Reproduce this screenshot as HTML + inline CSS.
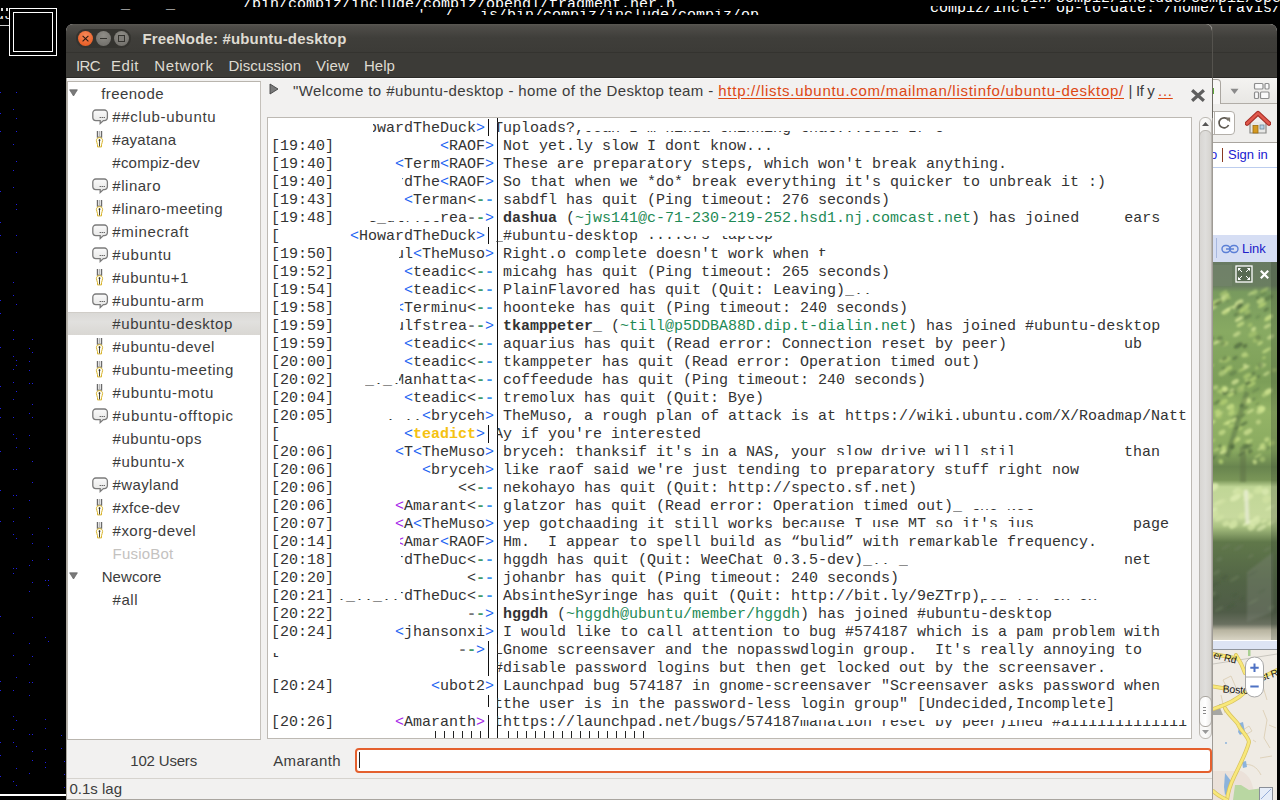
<!DOCTYPE html><html><head><meta charset="utf-8"><style>
*{margin:0;padding:0;box-sizing:border-box}
html,body{width:1280px;height:800px;overflow:hidden;background:#000;position:relative}
.a{position:absolute}
.t{position:absolute;white-space:pre;font-family:'Liberation Sans', sans-serif;line-height:normal}
.m{position:absolute;white-space:pre;font-family:'Liberation Mono', monospace;font-size:15px;line-height:18px;color:#333}
</style></head><body><div class="a" style="left:0;top:0px;width:1280px;height:7.3px;overflow:hidden"><div class="m" style="left:243px;top:-4.5px;color:#fff">/bin/compiz/include/compiz/opengl/fragment.her.h</div></div><div class="a" style="left:0;top:8.5px;width:1280px;height:6.0px;overflow:hidden"><div class="m" style="left:417px;top:-1.5px;color:#fff">&#x27;  / ..is/bin/compiz/include/compiz/op</div></div><div class="a" style="left:0;top:0px;width:1280px;height:4.5px;overflow:hidden"><div class="m" style="left:1011px;top:-10px;color:#fff">/bin/compiz/include/compiz/ope</div></div><div class="a" style="left:0;top:6px;width:1280px;height:7.5px;overflow:hidden"><div class="m" style="left:930px;top:-6.5px;color:#fff">compiz/incl-- op-to-date: /home/travis/b</div></div><div class="a" style="left:0;top:7.5px;width:1280px;height:2.0px;overflow:hidden"><div class="m" style="left:112px;top:-11.5px;color:#fff">._. . _ .</div></div><div class="a" style="left:0;top:15.5px;width:9px;height:6px;overflow:hidden"><div class="m" style="left:-5px;top:-8.5px;color:#eee">uu</div></div><div class="a" style="left:1px;top:8px;width:1.5px;height:3px;background:#ddd"></div><div class="a" style="left:6px;top:8px;width:1.5px;height:3px;background:#ddd"></div><div class="a" style="left:0;top:25px;width:9px;height:1px;background:#ccc"></div><svg class="a" style="left:0;top:0" width="66" height="800"><path fill="#1f1fe0" d="M0 92h1v1h-1zM0 113h1v1h-1zM0 131h1v1h-1zM0 191h1v1h-1zM0 222h1v1h-1zM0 235h1v1h-1zM0 300h1v1h-1zM0 313h1v1h-1zM0 347h1v1h-1zM0 386h1v1h-1zM0 408h1v1h-1zM0 417h1v1h-1zM0 451h1v1h-1zM0 490h1v1h-1zM0 521h1v1h-1zM0 616h1v1h-1zM0 681h1v1h-1zM0 690h1v1h-1zM0 742h1v1h-1zM0 755h1v1h-1zM0 776h1v1h-1zM16 92h1v1h-1zM13 109h1v1h-1zM16 118h1v1h-1zM16 131h1v1h-1zM13 144h1v1h-1zM16 161h1v1h-1zM13 170h1v1h-1zM13 187h1v1h-1zM16 204h1v1h-1zM16 209h1v1h-1zM16 235h1v1h-1zM16 252h1v1h-1zM13 282h1v1h-1zM13 295h1v1h-1zM16 304h1v1h-1zM13 330h1v1h-1zM13 339h1v1h-1zM13 356h1v1h-1zM16 360h1v1h-1zM13 369h1v1h-1zM16 365h1v1h-1zM13 382h1v1h-1zM13 399h1v1h-1zM16 391h1v1h-1zM13 417h1v1h-1zM13 434h1v1h-1zM16 438h1v1h-1zM16 447h1v1h-1zM13 469h1v1h-1zM16 469h1v1h-1zM13 495h1v1h-1zM16 495h1v1h-1zM13 508h1v1h-1zM13 521h1v1h-1zM13 534h1v1h-1zM16 538h1v1h-1zM13 568h1v1h-1zM16 568h1v1h-1zM13 573h1v1h-1zM13 633h1v1h-1zM13 655h1v1h-1zM16 677h1v1h-1zM13 690h1v1h-1zM13 716h1v1h-1zM16 720h1v1h-1zM13 729h1v1h-1zM13 742h1v1h-1zM16 746h1v1h-1zM16 768h1v1h-1zM13 781h1v1h-1zM16 785h1v1h-1zM32 339h1v1h-1zM29 348h1v1h-1zM32 352h1v1h-1zM29 361h1v1h-1zM29 370h1v1h-1zM29 383h1v1h-1zM32 383h1v1h-1zM32 404h1v1h-1zM29 413h1v1h-1zM32 417h1v1h-1zM29 435h1v1h-1zM29 448h1v1h-1zM32 461h1v1h-1zM32 482h1v1h-1zM29 500h1v1h-1zM29 517h1v1h-1zM32 534h1v1h-1zM32 543h1v1h-1zM32 560h1v1h-1zM29 565h1v1h-1zM32 582h1v1h-1zM29 591h1v1h-1zM32 617h1v1h-1zM29 643h1v1h-1zM29 664h1v1h-1zM32 656h1v1h-1zM29 682h1v1h-1zM32 682h1v1h-1zM29 695h1v1h-1zM29 734h1v1h-1zM32 734h1v1h-1zM32 751h1v1h-1zM32 760h1v1h-1zM29 773h1v1h-1zM48 528h1v1h-1zM48 546h1v1h-1zM48 559h1v1h-1zM45 580h1v1h-1zM48 580h1v1h-1zM48 585h1v1h-1zM45 637h1v1h-1zM48 641h1v1h-1zM45 719h1v1h-1zM45 728h1v1h-1zM45 749h1v1h-1zM45 762h1v1h-1zM45 767h1v1h-1zM61 735h1v1h-1zM61 748h1v1h-1zM64 761h1v1h-1zM64 774h1v1h-1zM64 787h1v1h-1z"/></svg><div class="a" style="left:0;top:794px;width:66px;height:2px;background:#fff"></div><div class="a" style="left:9px;top:8px;width:48px;height:48px;border:1px solid #fff"></div><div class="a" style="left:13px;top:12px;width:40px;height:40px;border:1px solid #fff"></div><div class="a" style="left:1190px;top:24px;width:87px;height:776px;background:#fff;border-radius:0 7px 0 0;overflow:hidden"><div class="a" style="left:0;top:0;width:100px;height:28px;background:linear-gradient(#5a5853 0px,#4f4d49 2px,#3f3e3a 14px,#3c3b37 28px)"></div><div class="a" style="left:0;top:28px;width:100px;height:1px;background:#34332f"></div><div class="a" style="left:0;top:29px;width:100px;height:25px;background:#3c3b37"></div><div class="a" style="left:0;top:53px;width:100px;height:1px;background:#2b2a27"></div><div class="a" style="left:0;top:54px;width:100px;height:25px;background:linear-gradient(#f4f3f1,#e8e7e4)"></div><div class="a" style="left:0;top:79px;width:100px;height:1px;background:#b1ada7"></div><div class="a" style="left:10px;top:55px;width:21px;height:25px;background:#f8f7f6;border:1px solid #aaa6a0;border-bottom:none;border-radius:0 4px 0 0"></div><div class="a" style="left:23px;top:64px;width:1px;height:6px;background:#5fa83a"></div><svg class="a" style="left:40px;top:64px" width="9" height="7"><path d="M0.5 0.8h8L4.5 6z" fill="#8a8a8a"/></svg><svg class="a" style="left:63px;top:58px" width="18" height="18"><g fill="#fafafa" stroke="#8d8d8d" stroke-width="1.2"><rect x="1.5" y="1.5" width="8.5" height="5.5" rx="1"/><rect x="12" y="1.5" width="4" height="5.5" rx="1"/><rect x="1.5" y="10" width="4" height="6.5" rx="1"/><rect x="7.5" y="10" width="8.5" height="6.5" rx="1"/></g></svg><div class="a" style="left:0;top:80px;width:100px;height:38px;background:#efeeec"></div><div class="a" style="left:0;top:118px;width:100px;height:1px;background:#a9a59f"></div><div class="a" style="left:10px;top:87px;width:35px;height:24px;background:#fff;border:1px solid #b3afa9;border-radius:0 4px 4px 0"></div><div class="a" style="left:24px;top:87px;width:1px;height:24px;background:#b3afa9"></div><svg class="a" style="left:26px;top:90px" width="17" height="17" viewBox="0 0 17 17"><path d="M12.3 6.2A5 5 0 1 0 12.6 11" fill="none" stroke="#5f5a52" stroke-width="1.7"/><path d="M9.3 3.6h4.8v4.6z" fill="#7d776c"/></svg><svg class="a" style="left:55px;top:86px" width="26" height="26" viewBox="0 0 26 26"><path d="M5 12v11h16V12" fill="#e8e8e6" stroke="#8a8a88" stroke-width="1.2"/><path d="M2 13.5L13 3.2l11 10.3" fill="none" stroke="#a8322a" stroke-width="4.6" stroke-linejoin="round" stroke-linecap="round"/><path d="M2 13.5L13 3.2l11 10.3" fill="none" stroke="#e0584c" stroke-width="2.4" stroke-linejoin="round" stroke-linecap="round"/><rect x="8" y="15.5" width="5" height="7.5" fill="#d59a21" stroke="#9c6b10" stroke-width="0.8"/><rect x="15" y="15" width="4" height="4" fill="#b9d4e6" stroke="#6d8797" stroke-width="0.8"/></svg><div class="a" style="left:23px;top:119px;width:64px;height:92px;background:#fff"></div><div class="t" style="left:20px;top:123.2px;font-size:13px;color:#1f1fd8">o</div><div class="a" style="left:32px;top:124px;width:1.3px;height:14px;background:#8a3a20"></div><div class="t" style="left:38px;top:123.2px;font-size:13px;color:#2020d0;letter-spacing:0px">Sign in</div><div class="a" style="left:23px;top:143px;width:64px;height:1px;background:#bccdee"></div><div class="a" style="left:23px;top:211px;width:64px;height:27px;background:#d6def4"></div><div class="a" style="left:26px;top:214px;width:1px;height:20px;background:#a8b8de"></div><svg class="a" style="left:31px;top:220px" width="18" height="10" viewBox="0 0 18 10"><g fill="none" stroke="#5b7fd6" stroke-width="1.4"><rect x="1" y="1.5" width="8" height="7" rx="3.5"/><rect x="9" y="1.5" width="8" height="7" rx="3.5"/><path d="M5 5h8"/></g></svg><div class="t" style="left:52px;top:217.2px;font-size:13px;color:#2020c8">Link</div><svg class="a" style="left:23px;top:238px" width="64" height="378" viewBox="0 0 64 378"><defs><linearGradient id="phg" x1="0" y1="0" x2="0" y2="1"><stop offset="0.000" stop-color="#687a62"/><stop offset="0.063" stop-color="#6a7e60"/><stop offset="0.079" stop-color="#789a5e"/><stop offset="0.185" stop-color="#88aa62"/><stop offset="0.317" stop-color="#7c9e58"/><stop offset="0.397" stop-color="#94b466"/><stop offset="0.497" stop-color="#8aaa60"/><stop offset="0.542" stop-color="#68844e"/><stop offset="0.577" stop-color="#7a9658"/><stop offset="0.595" stop-color="#c0d696"/><stop offset="0.675" stop-color="#c8da9e"/><stop offset="0.701" stop-color="#a8c080"/><stop offset="0.741" stop-color="#60784a"/><stop offset="0.847" stop-color="#526446"/><stop offset="0.926" stop-color="#505c48"/><stop offset="0.958" stop-color="#6a7060"/><stop offset="0.974" stop-color="#b8b4a0"/><stop offset="1.000" stop-color="#d8d4c4"/></linearGradient><filter id="phb"><feGaussianBlur stdDeviation="0.9"/></filter></defs><rect width="64" height="378" fill="url(#phg)"/><rect x="0" y="3" width="19" height="21" fill="#74856c" opacity=".6"/><g filter="url(#phb)"><ellipse cx="32.7" cy="105.8" rx="4.6" ry="1.5" fill="#d2e494" opacity="0.68" transform="rotate(-30 32.7 105.8)"/><ellipse cx="27.5" cy="166.3" rx="2.3" ry="1.6" fill="#b0cc72" opacity="0.82" transform="rotate(-30 27.5 166.3)"/><ellipse cx="48.2" cy="43.6" rx="3.8" ry="1.8" fill="#b0cc72" opacity="0.75" transform="rotate(-30 48.2 43.6)"/><ellipse cx="43.8" cy="105.9" rx="2.0" ry="1.9" fill="#b0cc72" opacity="0.56" transform="rotate(-30 43.8 105.9)"/><ellipse cx="9.8" cy="38.2" rx="4.3" ry="1.7" fill="#c4dc84" opacity="0.74" transform="rotate(-30 9.8 38.2)"/><ellipse cx="10.1" cy="129.6" rx="3.5" ry="2.1" fill="#c4dc84" opacity="0.76" transform="rotate(-30 10.1 129.6)"/><ellipse cx="15.2" cy="106.7" rx="4.5" ry="2.2" fill="#b0cc72" opacity="0.90" transform="rotate(-30 15.2 106.7)"/><ellipse cx="12.2" cy="82.2" rx="3.7" ry="1.4" fill="#d2e494" opacity="0.51" transform="rotate(-30 12.2 82.2)"/><ellipse cx="16.0" cy="46.5" rx="4.5" ry="1.2" fill="#c4dc84" opacity="0.88" transform="rotate(-30 16.0 46.5)"/><ellipse cx="54.4" cy="64.1" rx="4.1" ry="1.8" fill="#d2e494" opacity="0.65" transform="rotate(-30 54.4 64.1)"/><ellipse cx="10.3" cy="125.4" rx="2.3" ry="1.7" fill="#b0cc72" opacity="0.61" transform="rotate(-30 10.3 125.4)"/><ellipse cx="45.0" cy="193.8" rx="4.1" ry="1.2" fill="#c4dc84" opacity="0.55" transform="rotate(-30 45.0 193.8)"/><ellipse cx="28.2" cy="108.0" rx="3.3" ry="1.5" fill="#b0cc72" opacity="0.72" transform="rotate(-30 28.2 108.0)"/><ellipse cx="6.1" cy="153.9" rx="3.2" ry="2.6" fill="#b0cc72" opacity="0.65" transform="rotate(-30 6.1 153.9)"/><ellipse cx="51.6" cy="28.1" rx="4.7" ry="1.5" fill="#b0cc72" opacity="0.62" transform="rotate(-30 51.6 28.1)"/><ellipse cx="51.0" cy="95.8" rx="2.1" ry="1.4" fill="#b0cc72" opacity="0.73" transform="rotate(-30 51.0 95.8)"/><ellipse cx="-1.4" cy="103.9" rx="2.9" ry="1.3" fill="#b0cc72" opacity="0.63" transform="rotate(-30 -1.4 103.9)"/><ellipse cx="34.1" cy="43.5" rx="3.1" ry="2.1" fill="#c4dc84" opacity="0.51" transform="rotate(-30 34.1 43.5)"/><ellipse cx="34.4" cy="49.9" rx="3.2" ry="2.1" fill="#b0cc72" opacity="0.55" transform="rotate(-30 34.4 49.9)"/><ellipse cx="12.2" cy="81.5" rx="2.6" ry="2.2" fill="#b0cc72" opacity="0.60" transform="rotate(-30 12.2 81.5)"/><ellipse cx="10.2" cy="189.7" rx="3.8" ry="1.8" fill="#d2e494" opacity="0.85" transform="rotate(-30 10.2 189.7)"/><ellipse cx="0.4" cy="45.9" rx="4.1" ry="1.6" fill="#d2e494" opacity="0.60" transform="rotate(-30 0.4 45.9)"/><ellipse cx="35.0" cy="169.7" rx="4.8" ry="2.6" fill="#d2e494" opacity="0.71" transform="rotate(-30 35.0 169.7)"/><ellipse cx="27.7" cy="49.7" rx="3.8" ry="1.6" fill="#b0cc72" opacity="0.84" transform="rotate(-30 27.7 49.7)"/><ellipse cx="10.6" cy="185.8" rx="3.2" ry="1.5" fill="#c4dc84" opacity="0.53" transform="rotate(-30 10.6 185.8)"/><ellipse cx="15.5" cy="36.0" rx="2.4" ry="1.7" fill="#b0cc72" opacity="0.73" transform="rotate(-30 15.5 36.0)"/><ellipse cx="58.8" cy="181.2" rx="3.6" ry="2.5" fill="#b0cc72" opacity="0.79" transform="rotate(-30 58.8 181.2)"/><ellipse cx="55.3" cy="129.5" rx="4.1" ry="2.5" fill="#d2e494" opacity="0.86" transform="rotate(-30 55.3 129.5)"/><ellipse cx="37.4" cy="31.7" rx="2.9" ry="1.4" fill="#d2e494" opacity="0.53" transform="rotate(-30 37.4 31.7)"/><ellipse cx="26.1" cy="40.5" rx="4.7" ry="2.2" fill="#d2e494" opacity="0.79" transform="rotate(-30 26.1 40.5)"/><ellipse cx="47.2" cy="149.0" rx="4.1" ry="2.5" fill="#d2e494" opacity="0.64" transform="rotate(-30 47.2 149.0)"/><ellipse cx="23.9" cy="177.8" rx="3.7" ry="2.1" fill="#c4dc84" opacity="0.85" transform="rotate(-30 23.9 177.8)"/><ellipse cx="34.1" cy="93.8" rx="2.3" ry="1.4" fill="#b0cc72" opacity="0.53" transform="rotate(-30 34.1 93.8)"/><ellipse cx="23.8" cy="72.2" rx="4.2" ry="2.0" fill="#d2e494" opacity="0.66" transform="rotate(-30 23.8 72.2)"/><ellipse cx="50.0" cy="103.8" rx="3.5" ry="1.6" fill="#c4dc84" opacity="0.71" transform="rotate(-30 50.0 103.8)"/><ellipse cx="-0.6" cy="43.1" rx="4.3" ry="2.1" fill="#b0cc72" opacity="0.55" transform="rotate(-30 -0.6 43.1)"/><ellipse cx="53.6" cy="111.6" rx="4.0" ry="1.5" fill="#d2e494" opacity="0.62" transform="rotate(-30 53.6 111.6)"/><ellipse cx="54.2" cy="57.2" rx="3.5" ry="1.5" fill="#b0cc72" opacity="0.87" transform="rotate(-30 54.2 57.2)"/><ellipse cx="13.5" cy="97.6" rx="4.4" ry="2.5" fill="#b0cc72" opacity="0.67" transform="rotate(-30 13.5 97.6)"/><ellipse cx="21.8" cy="179.4" rx="2.6" ry="1.4" fill="#b0cc72" opacity="0.87" transform="rotate(-30 21.8 179.4)"/><ellipse cx="53.5" cy="88.3" rx="4.9" ry="1.6" fill="#c4dc84" opacity="0.78" transform="rotate(-30 53.5 88.3)"/><ellipse cx="25.9" cy="57.1" rx="4.5" ry="1.7" fill="#d2e494" opacity="0.87" transform="rotate(-30 25.9 57.1)"/><ellipse cx="39.7" cy="117.4" rx="4.9" ry="1.8" fill="#b0cc72" opacity="0.84" transform="rotate(-30 39.7 117.4)"/><ellipse cx="-0.0" cy="40.8" rx="4.1" ry="2.0" fill="#b0cc72" opacity="0.52" transform="rotate(-30 -0.0 40.8)"/><ellipse cx="47.1" cy="81.2" rx="3.2" ry="1.5" fill="#c4dc84" opacity="0.76" transform="rotate(-30 47.1 81.2)"/><ellipse cx="14.5" cy="160.3" rx="5.0" ry="1.4" fill="#c4dc84" opacity="0.82" transform="rotate(-30 14.5 160.3)"/><ellipse cx="31.2" cy="46.8" rx="4.9" ry="2.2" fill="#b0cc72" opacity="0.82" transform="rotate(-30 31.2 46.8)"/><ellipse cx="27.5" cy="62.3" rx="4.3" ry="1.9" fill="#c4dc84" opacity="0.79" transform="rotate(-30 27.5 62.3)"/><ellipse cx="12.0" cy="34.2" rx="4.8" ry="1.9" fill="#d2e494" opacity="0.72" transform="rotate(-30 12.0 34.2)"/><ellipse cx="7.9" cy="199.5" rx="2.3" ry="2.5" fill="#b0cc72" opacity="0.86" transform="rotate(-30 7.9 199.5)"/><ellipse cx="6.1" cy="152.2" rx="4.7" ry="1.2" fill="#d2e494" opacity="0.58" transform="rotate(-30 6.1 152.2)"/><ellipse cx="38.5" cy="122.6" rx="4.8" ry="1.8" fill="#b0cc72" opacity="0.82" transform="rotate(-30 38.5 122.6)"/><ellipse cx="10.7" cy="140.0" rx="4.4" ry="2.5" fill="#b0cc72" opacity="0.85" transform="rotate(-30 10.7 140.0)"/><ellipse cx="13.0" cy="49.2" rx="4.9" ry="2.0" fill="#d2e494" opacity="0.89" transform="rotate(-30 13.0 49.2)"/><ellipse cx="17.9" cy="164.0" rx="3.0" ry="1.3" fill="#b0cc72" opacity="0.84" transform="rotate(-30 17.9 164.0)"/><ellipse cx="32.1" cy="103.8" rx="2.1" ry="2.3" fill="#d2e494" opacity="0.69" transform="rotate(-30 32.1 103.8)"/><ellipse cx="47.6" cy="39.0" rx="4.1" ry="2.5" fill="#c4dc84" opacity="0.71" transform="rotate(-30 47.6 39.0)"/><ellipse cx="60.0" cy="108.9" rx="4.0" ry="1.8" fill="#b0cc72" opacity="0.71" transform="rotate(-30 60.0 108.9)"/><ellipse cx="33.9" cy="179.3" rx="2.7" ry="1.9" fill="#b0cc72" opacity="0.53" transform="rotate(-30 33.9 179.3)"/><ellipse cx="43.2" cy="77.9" rx="3.5" ry="2.5" fill="#b0cc72" opacity="0.57" transform="rotate(-30 43.2 77.9)"/><ellipse cx="39.6" cy="72.1" rx="4.6" ry="2.6" fill="#b0cc72" opacity="0.58" transform="rotate(-30 39.6 72.1)"/><ellipse cx="33.5" cy="118.2" rx="2.3" ry="1.2" fill="#c4dc84" opacity="0.66" transform="rotate(-30 33.5 118.2)"/><ellipse cx="31.4" cy="92.8" rx="3.2" ry="2.3" fill="#c4dc84" opacity="0.71" transform="rotate(-30 31.4 92.8)"/><ellipse cx="28.4" cy="124.8" rx="4.8" ry="1.8" fill="#b0cc72" opacity="0.57" transform="rotate(-30 28.4 124.8)"/><ellipse cx="47.6" cy="186.4" rx="3.4" ry="1.4" fill="#d2e494" opacity="0.61" transform="rotate(-30 47.6 186.4)"/><ellipse cx="48.6" cy="102.6" rx="2.3" ry="1.8" fill="#d2e494" opacity="0.71" transform="rotate(-30 48.6 102.6)"/><ellipse cx="14.1" cy="33.1" rx="2.1" ry="1.5" fill="#b0cc72" opacity="0.81" transform="rotate(-30 14.1 33.1)"/><ellipse cx="40.6" cy="67.1" rx="2.7" ry="1.9" fill="#d2e494" opacity="0.79" transform="rotate(-30 40.6 67.1)"/><ellipse cx="34.1" cy="113.9" rx="4.2" ry="2.2" fill="#b0cc72" opacity="0.75" transform="rotate(-30 34.1 113.9)"/><ellipse cx="-0.6" cy="179.1" rx="3.6" ry="1.4" fill="#b0cc72" opacity="0.67" transform="rotate(-30 -0.6 179.1)"/><ellipse cx="37.1" cy="63.1" rx="2.6" ry="2.0" fill="#b0cc72" opacity="0.59" transform="rotate(-30 37.1 63.1)"/><ellipse cx="6.5" cy="128.9" rx="3.0" ry="1.5" fill="#b0cc72" opacity="0.75" transform="rotate(-30 6.5 128.9)"/><ellipse cx="53.2" cy="131.7" rx="5.0" ry="2.4" fill="#c4dc84" opacity="0.59" transform="rotate(-30 53.2 131.7)"/><ellipse cx="12.8" cy="51.0" rx="3.2" ry="1.8" fill="#b0cc72" opacity="0.54" transform="rotate(-30 12.8 51.0)"/><ellipse cx="31.7" cy="189.9" rx="3.2" ry="2.2" fill="#b0cc72" opacity="0.55" transform="rotate(-30 31.7 189.9)"/><ellipse cx="10.5" cy="31.1" rx="4.5" ry="1.7" fill="#b0cc72" opacity="0.64" transform="rotate(-30 10.5 31.1)"/><ellipse cx="37.3" cy="149.2" rx="4.1" ry="1.5" fill="#d2e494" opacity="0.70" transform="rotate(-30 37.3 149.2)"/><ellipse cx="4.6" cy="40.1" rx="3.8" ry="2.5" fill="#c4dc84" opacity="0.80" transform="rotate(-30 4.6 40.1)"/><ellipse cx="9.8" cy="110.8" rx="4.5" ry="2.6" fill="#c4dc84" opacity="0.58" transform="rotate(-30 9.8 110.8)"/><ellipse cx="3.9" cy="187.4" rx="4.0" ry="1.3" fill="#c4dc84" opacity="0.55" transform="rotate(-30 3.9 187.4)"/><ellipse cx="22.2" cy="44.6" rx="3.3" ry="2.0" fill="#d2e494" opacity="0.71" transform="rotate(-30 22.2 44.6)"/><ellipse cx="41.5" cy="30.3" rx="3.4" ry="2.2" fill="#c4dc84" opacity="0.57" transform="rotate(-30 41.5 30.3)"/><ellipse cx="10.1" cy="97.7" rx="4.4" ry="1.7" fill="#c4dc84" opacity="0.54" transform="rotate(-30 10.1 97.7)"/><ellipse cx="50.2" cy="42.6" rx="3.7" ry="1.5" fill="#b0cc72" opacity="0.88" transform="rotate(-30 50.2 42.6)"/><ellipse cx="19.1" cy="128.6" rx="2.3" ry="2.2" fill="#d2e494" opacity="0.61" transform="rotate(-30 19.1 128.6)"/><ellipse cx="55.9" cy="55.5" rx="4.6" ry="2.2" fill="#c4dc84" opacity="0.86" transform="rotate(-30 55.9 55.5)"/><ellipse cx="45.4" cy="160.0" rx="2.6" ry="2.3" fill="#d2e494" opacity="0.58" transform="rotate(-30 45.4 160.0)"/><ellipse cx="4.3" cy="79.9" rx="4.7" ry="1.3" fill="#d2e494" opacity="0.90" transform="rotate(-30 4.3 79.9)"/><ellipse cx="57.6" cy="75.0" rx="4.0" ry="2.0" fill="#d2e494" opacity="0.64" transform="rotate(-30 57.6 75.0)"/><ellipse cx="22.2" cy="119.7" rx="4.1" ry="2.3" fill="#d2e494" opacity="0.76" transform="rotate(-30 22.2 119.7)"/><ellipse cx="-0.6" cy="196.6" rx="2.7" ry="1.7" fill="#48623a" opacity="0.39" transform="rotate(-30 -0.6 196.6)"/><ellipse cx="45.2" cy="114.8" rx="2.3" ry="1.4" fill="#48623a" opacity="0.48" transform="rotate(-30 45.2 114.8)"/><ellipse cx="32.1" cy="183.8" rx="3.6" ry="2.3" fill="#48623a" opacity="0.50" transform="rotate(-30 32.1 183.8)"/><ellipse cx="25.5" cy="45.1" rx="3.8" ry="2.1" fill="#48623a" opacity="0.38" transform="rotate(-30 25.5 45.1)"/><ellipse cx="55.7" cy="35.8" rx="4.9" ry="2.3" fill="#4f6c3e" opacity="0.49" transform="rotate(-30 55.7 35.8)"/><ellipse cx="35.0" cy="121.2" rx="3.3" ry="1.8" fill="#587444" opacity="0.68" transform="rotate(-30 35.0 121.2)"/><ellipse cx="20.7" cy="130.8" rx="2.8" ry="2.4" fill="#587444" opacity="0.52" transform="rotate(-30 20.7 130.8)"/><ellipse cx="44.4" cy="142.1" rx="2.7" ry="1.1" fill="#4f6c3e" opacity="0.35" transform="rotate(-30 44.4 142.1)"/><ellipse cx="44.8" cy="54.9" rx="2.9" ry="1.6" fill="#587444" opacity="0.37" transform="rotate(-30 44.8 54.9)"/><ellipse cx="42.8" cy="128.1" rx="4.7" ry="1.6" fill="#587444" opacity="0.38" transform="rotate(-30 42.8 128.1)"/><ellipse cx="58.3" cy="110.1" rx="2.3" ry="2.2" fill="#4f6c3e" opacity="0.37" transform="rotate(-30 58.3 110.1)"/><ellipse cx="7.0" cy="184.4" rx="2.3" ry="1.9" fill="#4f6c3e" opacity="0.56" transform="rotate(-30 7.0 184.4)"/><ellipse cx="10.6" cy="106.4" rx="2.5" ry="1.5" fill="#4f6c3e" opacity="0.47" transform="rotate(-30 10.6 106.4)"/><ellipse cx="23.9" cy="52.0" rx="3.7" ry="1.6" fill="#48623a" opacity="0.44" transform="rotate(-30 23.9 52.0)"/><ellipse cx="30.9" cy="161.8" rx="4.2" ry="1.4" fill="#4f6c3e" opacity="0.68" transform="rotate(-30 30.9 161.8)"/><ellipse cx="53.3" cy="47.6" rx="3.1" ry="1.4" fill="#48623a" opacity="0.57" transform="rotate(-30 53.3 47.6)"/><ellipse cx="33.0" cy="145.8" rx="2.8" ry="1.4" fill="#48623a" opacity="0.42" transform="rotate(-30 33.0 145.8)"/><ellipse cx="29.1" cy="191.7" rx="4.6" ry="1.1" fill="#48623a" opacity="0.67" transform="rotate(-30 29.1 191.7)"/><ellipse cx="14.8" cy="38.5" rx="2.1" ry="1.3" fill="#587444" opacity="0.36" transform="rotate(-30 14.8 38.5)"/><ellipse cx="44.9" cy="75.9" rx="2.7" ry="2.5" fill="#48623a" opacity="0.41" transform="rotate(-30 44.9 75.9)"/><ellipse cx="20.0" cy="111.2" rx="4.2" ry="2.3" fill="#587444" opacity="0.47" transform="rotate(-30 20.0 111.2)"/><ellipse cx="5.4" cy="40.8" rx="4.3" ry="1.7" fill="#48623a" opacity="0.64" transform="rotate(-30 5.4 40.8)"/><ellipse cx="22.2" cy="156.5" rx="4.0" ry="2.5" fill="#4f6c3e" opacity="0.48" transform="rotate(-30 22.2 156.5)"/><ellipse cx="32.0" cy="84.0" rx="2.6" ry="2.0" fill="#48623a" opacity="0.64" transform="rotate(-30 32.0 84.0)"/><ellipse cx="26.6" cy="127.9" rx="2.2" ry="1.8" fill="#587444" opacity="0.38" transform="rotate(-30 26.6 127.9)"/><ellipse cx="40.5" cy="111.4" rx="2.0" ry="1.5" fill="#587444" opacity="0.64" transform="rotate(-30 40.5 111.4)"/><ellipse cx="35.4" cy="184.6" rx="4.2" ry="2.0" fill="#48623a" opacity="0.46" transform="rotate(-30 35.4 184.6)"/><ellipse cx="6.9" cy="76.7" rx="3.0" ry="2.4" fill="#587444" opacity="0.58" transform="rotate(-30 6.9 76.7)"/><ellipse cx="25.3" cy="83.5" rx="4.8" ry="2.4" fill="#48623a" opacity="0.67" transform="rotate(-30 25.3 83.5)"/><ellipse cx="47.8" cy="103.3" rx="2.7" ry="2.5" fill="#587444" opacity="0.51" transform="rotate(-30 47.8 103.3)"/><ellipse cx="30.0" cy="153.5" rx="3.1" ry="1.5" fill="#4f6c3e" opacity="0.48" transform="rotate(-30 30.0 153.5)"/><ellipse cx="22.0" cy="96.0" rx="3.1" ry="1.6" fill="#4f6c3e" opacity="0.61" transform="rotate(-30 22.0 96.0)"/><ellipse cx="34.7" cy="54.6" rx="4.3" ry="2.3" fill="#4f6c3e" opacity="0.41" transform="rotate(-30 34.7 54.6)"/><ellipse cx="-0.6" cy="76.4" rx="2.5" ry="1.4" fill="#48623a" opacity="0.37" transform="rotate(-30 -0.6 76.4)"/><ellipse cx="50.2" cy="31.8" rx="3.6" ry="2.2" fill="#587444" opacity="0.37" transform="rotate(-30 50.2 31.8)"/><ellipse cx="3.1" cy="42.5" rx="2.9" ry="1.0" fill="#48623a" opacity="0.39" transform="rotate(-30 3.1 42.5)"/><ellipse cx="4.0" cy="140.4" rx="4.1" ry="1.7" fill="#48623a" opacity="0.50" transform="rotate(-30 4.0 140.4)"/><ellipse cx="19.0" cy="184.1" rx="3.0" ry="2.5" fill="#587444" opacity="0.49" transform="rotate(-30 19.0 184.1)"/><ellipse cx="28.6" cy="143.7" rx="2.2" ry="1.9" fill="#48623a" opacity="0.63" transform="rotate(-30 28.6 143.7)"/><ellipse cx="44.9" cy="36.0" rx="2.0" ry="1.6" fill="#48623a" opacity="0.47" transform="rotate(-30 44.9 36.0)"/><ellipse cx="26.8" cy="43.4" rx="3.6" ry="2.1" fill="#48623a" opacity="0.57" transform="rotate(-30 26.8 43.4)"/><ellipse cx="24.1" cy="166.0" rx="2.7" ry="1.2" fill="#587444" opacity="0.67" transform="rotate(-30 24.1 166.0)"/><ellipse cx="40.4" cy="137.3" rx="3.3" ry="1.4" fill="#587444" opacity="0.42" transform="rotate(-30 40.4 137.3)"/><ellipse cx="1.7" cy="194.8" rx="2.9" ry="1.2" fill="#587444" opacity="0.61" transform="rotate(-30 1.7 194.8)"/><ellipse cx="54.6" cy="186.2" rx="3.4" ry="2.2" fill="#587444" opacity="0.36" transform="rotate(-30 54.6 186.2)"/><ellipse cx="10.3" cy="81.8" rx="2.7" ry="2.1" fill="#587444" opacity="0.43" transform="rotate(-30 10.3 81.8)"/><ellipse cx="11.9" cy="130.3" rx="3.2" ry="2.4" fill="#4f6c3e" opacity="0.66" transform="rotate(-30 11.9 130.3)"/><ellipse cx="36.9" cy="189.2" rx="2.8" ry="2.3" fill="#48623a" opacity="0.52" transform="rotate(-30 36.9 189.2)"/><ellipse cx="19.2" cy="185.3" rx="2.3" ry="2.3" fill="#48623a" opacity="0.62" transform="rotate(-30 19.2 185.3)"/><ellipse cx="11.5" cy="96.7" rx="3.2" ry="1.8" fill="#4f6c3e" opacity="0.63" transform="rotate(-30 11.5 96.7)"/><ellipse cx="15.0" cy="161.3" rx="2.5" ry="1.5" fill="#cfe48e" opacity="0.76" transform="rotate(-30 15.0 161.3)"/><ellipse cx="21.0" cy="157.8" rx="3.2" ry="1.7" fill="#cfe48e" opacity="0.79" transform="rotate(-30 21.0 157.8)"/><ellipse cx="18.0" cy="132.6" rx="3.6" ry="1.7" fill="#bcd67c" opacity="0.86" transform="rotate(-30 18.0 132.6)"/><ellipse cx="36.4" cy="179.3" rx="3.5" ry="1.5" fill="#cfe48e" opacity="0.56" transform="rotate(-30 36.4 179.3)"/><ellipse cx="50.5" cy="185.7" rx="2.5" ry="2.6" fill="#cfe48e" opacity="0.53" transform="rotate(-30 50.5 185.7)"/><ellipse cx="27.8" cy="127.8" rx="3.5" ry="2.3" fill="#bcd67c" opacity="0.53" transform="rotate(-30 27.8 127.8)"/><ellipse cx="-0.8" cy="160.5" rx="3.8" ry="1.6" fill="#cfe48e" opacity="0.67" transform="rotate(-30 -0.8 160.5)"/><ellipse cx="10.9" cy="186.1" rx="2.3" ry="2.7" fill="#bcd67c" opacity="0.71" transform="rotate(-30 10.9 186.1)"/><ellipse cx="17.3" cy="144.9" rx="4.0" ry="2.5" fill="#cfe48e" opacity="0.72" transform="rotate(-30 17.3 144.9)"/><ellipse cx="2.6" cy="125.4" rx="2.8" ry="2.2" fill="#cfe48e" opacity="0.54" transform="rotate(-30 2.6 125.4)"/><ellipse cx="49.4" cy="197.4" rx="2.8" ry="2.6" fill="#bcd67c" opacity="0.50" transform="rotate(-30 49.4 197.4)"/><ellipse cx="33.0" cy="139.0" rx="3.7" ry="2.8" fill="#bcd67c" opacity="0.81" transform="rotate(-30 33.0 139.0)"/><ellipse cx="53.9" cy="177.5" rx="2.8" ry="2.3" fill="#cfe48e" opacity="0.62" transform="rotate(-30 53.9 177.5)"/><ellipse cx="18.9" cy="143.9" rx="2.2" ry="1.8" fill="#bcd67c" opacity="0.72" transform="rotate(-30 18.9 143.9)"/><ellipse cx="4.8" cy="150.1" rx="3.1" ry="2.6" fill="#bcd67c" opacity="0.88" transform="rotate(-30 4.8 150.1)"/><ellipse cx="49.3" cy="146.5" rx="3.2" ry="1.7" fill="#cfe48e" opacity="0.54" transform="rotate(-30 49.3 146.5)"/><ellipse cx="9.1" cy="170.4" rx="3.7" ry="2.4" fill="#cfe48e" opacity="0.66" transform="rotate(-30 9.1 170.4)"/><ellipse cx="12.0" cy="127.2" rx="2.9" ry="2.7" fill="#cfe48e" opacity="0.89" transform="rotate(-30 12.0 127.2)"/><ellipse cx="49.0" cy="147.3" rx="3.5" ry="2.7" fill="#cfe48e" opacity="0.76" transform="rotate(-30 49.0 147.3)"/><ellipse cx="18.5" cy="150.9" rx="3.5" ry="2.4" fill="#bcd67c" opacity="0.75" transform="rotate(-30 18.5 150.9)"/><ellipse cx="46.9" cy="145.4" rx="3.2" ry="1.5" fill="#cfe48e" opacity="0.76" transform="rotate(-30 46.9 145.4)"/><ellipse cx="19.2" cy="146.5" rx="2.8" ry="2.3" fill="#bcd67c" opacity="0.54" transform="rotate(-30 19.2 146.5)"/><ellipse cx="49.2" cy="183.1" rx="3.1" ry="1.9" fill="#cfe48e" opacity="0.60" transform="rotate(-30 49.2 183.1)"/><ellipse cx="35.9" cy="138.7" rx="2.4" ry="2.9" fill="#cfe48e" opacity="0.73" transform="rotate(-30 35.9 138.7)"/><ellipse cx="41.8" cy="199.9" rx="2.1" ry="2.5" fill="#cfe48e" opacity="0.73" transform="rotate(-30 41.8 199.9)"/><ellipse cx="6.4" cy="256.2" rx="5.1" ry="2.2" fill="#d0e2a2" opacity="0.80" transform="rotate(-30 6.4 256.2)"/><ellipse cx="20.4" cy="262.9" rx="4.4" ry="3.0" fill="#d0e2a2" opacity="0.91" transform="rotate(-30 20.4 262.9)"/><ellipse cx="33.3" cy="232.5" rx="3.8" ry="3.3" fill="#dcebb0" opacity="0.80" transform="rotate(-30 33.3 232.5)"/><ellipse cx="48.7" cy="265.7" rx="5.5" ry="2.1" fill="#dcebb0" opacity="0.64" transform="rotate(-30 48.7 265.7)"/><ellipse cx="12.9" cy="261.5" rx="3.6" ry="2.6" fill="#d0e2a2" opacity="0.89" transform="rotate(-30 12.9 261.5)"/><ellipse cx="-0.0" cy="225.4" rx="5.8" ry="3.5" fill="#dcebb0" opacity="0.87" transform="rotate(-30 -0.0 225.4)"/><ellipse cx="44.9" cy="228.1" rx="4.9" ry="3.0" fill="#d0e2a2" opacity="0.82" transform="rotate(-30 44.9 228.1)"/><ellipse cx="23.5" cy="229.0" rx="4.2" ry="2.6" fill="#dcebb0" opacity="0.65" transform="rotate(-30 23.5 229.0)"/><ellipse cx="30.2" cy="229.6" rx="5.8" ry="1.6" fill="#d0e2a2" opacity="0.69" transform="rotate(-30 30.2 229.6)"/><ellipse cx="42.7" cy="256.5" rx="4.5" ry="1.7" fill="#dcebb0" opacity="0.74" transform="rotate(-30 42.7 256.5)"/><ellipse cx="53.6" cy="237.2" rx="4.5" ry="3.5" fill="#d0e2a2" opacity="0.86" transform="rotate(-30 53.6 237.2)"/><ellipse cx="51.0" cy="258.9" rx="3.4" ry="1.7" fill="#d0e2a2" opacity="0.89" transform="rotate(-30 51.0 258.9)"/><ellipse cx="18.5" cy="263.3" rx="3.1" ry="3.3" fill="#d0e2a2" opacity="0.75" transform="rotate(-30 18.5 263.3)"/><ellipse cx="36.2" cy="235.0" rx="4.8" ry="3.0" fill="#d0e2a2" opacity="0.86" transform="rotate(-30 36.2 235.0)"/><ellipse cx="34.8" cy="235.4" rx="5.5" ry="2.0" fill="#dcebb0" opacity="0.69" transform="rotate(-30 34.8 235.4)"/><ellipse cx="58.3" cy="260.4" rx="4.6" ry="2.0" fill="#d0e2a2" opacity="0.84" transform="rotate(-30 58.3 260.4)"/><ellipse cx="22.5" cy="235.5" rx="6.0" ry="3.0" fill="#dcebb0" opacity="0.91" transform="rotate(-30 22.5 235.5)"/><ellipse cx="20.9" cy="260.3" rx="3.5" ry="2.8" fill="#d0e2a2" opacity="0.80" transform="rotate(-30 20.9 260.3)"/><ellipse cx="5.6" cy="240.5" rx="5.4" ry="1.7" fill="#dcebb0" opacity="0.63" transform="rotate(-30 5.6 240.5)"/><ellipse cx="57.0" cy="245.7" rx="5.2" ry="1.5" fill="#dcebb0" opacity="0.70" transform="rotate(-30 57.0 245.7)"/><ellipse cx="25.3" cy="229.6" rx="4.2" ry="2.2" fill="#d0e2a2" opacity="0.89" transform="rotate(-30 25.3 229.6)"/><ellipse cx="0.8" cy="247.8" rx="3.9" ry="2.1" fill="#dcebb0" opacity="0.76" transform="rotate(-30 0.8 247.8)"/><ellipse cx="46.2" cy="228.3" rx="3.6" ry="3.2" fill="#d0e2a2" opacity="0.91" transform="rotate(-30 46.2 228.3)"/><ellipse cx="1.7" cy="252.5" rx="4.1" ry="2.4" fill="#d0e2a2" opacity="0.89" transform="rotate(-30 1.7 252.5)"/><ellipse cx="52.5" cy="229.6" rx="3.7" ry="3.4" fill="#dcebb0" opacity="0.79" transform="rotate(-30 52.5 229.6)"/><ellipse cx="38.3" cy="265.0" rx="3.9" ry="3.3" fill="#d0e2a2" opacity="0.85" transform="rotate(-30 38.3 265.0)"/><ellipse cx="42.2" cy="260.3" rx="5.9" ry="3.1" fill="#dcebb0" opacity="0.72" transform="rotate(-30 42.2 260.3)"/><ellipse cx="8.5" cy="240.3" rx="5.1" ry="2.0" fill="#d0e2a2" opacity="0.64" transform="rotate(-30 8.5 240.3)"/><ellipse cx="29.1" cy="253.7" rx="4.1" ry="2.8" fill="#d0e2a2" opacity="0.88" transform="rotate(-30 29.1 253.7)"/><ellipse cx="34.6" cy="260.9" rx="5.7" ry="1.9" fill="#dcebb0" opacity="0.94" transform="rotate(-30 34.6 260.9)"/><ellipse cx="6.2" cy="297.4" rx="3.3" ry="1.9" fill="#6c7e5c" opacity="0.54" transform="rotate(-30 6.2 297.4)"/><ellipse cx="54.3" cy="287.0" rx="4.1" ry="1.3" fill="#6c7e5c" opacity="0.58" transform="rotate(-30 54.3 287.0)"/><ellipse cx="3.4" cy="336.6" rx="3.8" ry="1.2" fill="#485a3e" opacity="0.70" transform="rotate(-30 3.4 336.6)"/><ellipse cx="-0.2" cy="331.9" rx="3.1" ry="1.5" fill="#6c7e5c" opacity="0.70" transform="rotate(-30 -0.2 331.9)"/><ellipse cx="21.9" cy="333.0" rx="3.3" ry="1.8" fill="#485a3e" opacity="0.42" transform="rotate(-30 21.9 333.0)"/><ellipse cx="17.9" cy="343.9" rx="5.1" ry="1.5" fill="#485a3e" opacity="0.63" transform="rotate(-30 17.9 343.9)"/><ellipse cx="40.4" cy="339.5" rx="6.1" ry="1.1" fill="#6c7e5c" opacity="0.58" transform="rotate(-30 40.4 339.5)"/><ellipse cx="39.4" cy="311.6" rx="6.2" ry="1.2" fill="#485a3e" opacity="0.64" transform="rotate(-30 39.4 311.6)"/><ellipse cx="11.7" cy="315.3" rx="3.8" ry="2.0" fill="#485a3e" opacity="0.48" transform="rotate(-30 11.7 315.3)"/><ellipse cx="25.8" cy="285.6" rx="5.4" ry="1.6" fill="#6c7e5c" opacity="0.50" transform="rotate(-30 25.8 285.6)"/><ellipse cx="29.2" cy="336.8" rx="3.1" ry="1.1" fill="#485a3e" opacity="0.66" transform="rotate(-30 29.2 336.8)"/><ellipse cx="37.7" cy="294.1" rx="3.2" ry="1.4" fill="#6c7e5c" opacity="0.59" transform="rotate(-30 37.7 294.1)"/><ellipse cx="48.8" cy="329.3" rx="5.0" ry="1.7" fill="#485a3e" opacity="0.63" transform="rotate(-30 48.8 329.3)"/><ellipse cx="21.5" cy="316.7" rx="5.8" ry="1.8" fill="#6c7e5c" opacity="0.45" transform="rotate(-30 21.5 316.7)"/><ellipse cx="1.8" cy="335.5" rx="5.8" ry="1.7" fill="#485a3e" opacity="0.54" transform="rotate(-30 1.8 335.5)"/><ellipse cx="6.0" cy="347.1" rx="4.8" ry="1.7" fill="#6c7e5c" opacity="0.44" transform="rotate(-30 6.0 347.1)"/><ellipse cx="12.9" cy="284.7" rx="5.2" ry="1.5" fill="#6c7e5c" opacity="0.43" transform="rotate(-30 12.9 284.7)"/><ellipse cx="58.2" cy="345.6" rx="3.5" ry="1.9" fill="#6c7e5c" opacity="0.49" transform="rotate(-30 58.2 345.6)"/><ellipse cx="3.3" cy="310.4" rx="4.3" ry="2.0" fill="#6c7e5c" opacity="0.51" transform="rotate(-30 3.3 310.4)"/><ellipse cx="0.5" cy="323.5" rx="7.0" ry="1.7" fill="#485a3e" opacity="0.58" transform="rotate(-30 0.5 323.5)"/><path d="M34 130L14 195" stroke="#50683e" stroke-width="5" opacity=".45"/><path d="M30 185v35" stroke="#5c7248" stroke-width="6" opacity=".5"/><path d="M33 228l1.5 34" stroke="#e6ecd0" stroke-width="4" opacity=".85"/><path d="M34 310l26-20v60l-26 10z" fill="#7f8878" opacity=".35"/></g><rect x="58" y="0" width="6" height="378" fill="#2f3a2c" opacity=".25"/></svg><svg class="a" style="left:45px;top:241px" width="18" height="18" viewBox="0 0 18 18"><rect x="1" y="1" width="16" height="16" fill="rgba(40,50,40,.25)" stroke="#fff" stroke-width="1.3"/><g stroke="#fff" stroke-width="1"><path d="M3.5 3.5l3.5 3.5M14.5 3.5L11 7M3.5 14.5L7 11M14.5 14.5L11 11"/></g><g fill="#fff"><path d="M3 3h3.2L3 6.2z"/><path d="M15 3h-3.2L15 6.2z"/><path d="M3 15h3.2L3 11.8z"/><path d="M15 15h-3.2L15 11.8z"/></g></svg><svg class="a" style="left:69px;top:245px" width="11" height="11"><path d="M1.8 1.8l7.4 7.4M9.2 1.8L1.8 9.2" stroke="#fff" stroke-width="2.2"/></svg><div class="a" style="left:23px;top:617px;width:64px;height:9px;background:#dde4f4;border-bottom:1px solid #8f949c"></div><svg class="a" style="left:23px;top:626px" width="64" height="150" viewBox="0 0 64 150"><rect width="64" height="150" fill="#efebe4"/><path d="M0 121h28c8 4 12 10 14 29H0z" fill="#ebe1d9"/><path d="M22 135l6 0 8 5 14-2 2 12H20z" fill="#b9d7a2"/><path d="M0 14L64 4" stroke="#c9c6bf" stroke-width="1"/><rect x="35" y="0" width="2.5" height="6" fill="#a9cf92"/><g fill="none" stroke="#dccfb6" stroke-width="0.9"><path d="M10 30l8-4 6 14-7 4zM8 45l4 18M50 60l4 10-3 18 6 10M47 108l12-2M30 80l6-4 3 5-5 3zM40 90l3 2M30 115c8-2 14 2 18 10M48 30l6 20M56 75l7 3"/></g><g fill="#8cb3dc"><path d="M27 73l3-1 2 10-5 3-2-3z"/><path d="M29 112l4-1 1 6-4 1z"/><path d="M12 123l6 8-3 12-3 2-1-8z"/><circle cx="13" cy="93" r="1"/><circle cx="7" cy="55" r="1"/></g><path d="M0 58h7l3 7H0z" fill="#a7a7a3"/><path d="M23 5C27 11 30 17 32 23" fill="none" stroke="#d8c25e" stroke-width="4" stroke-linecap="round" stroke-linejoin="round"/><path d="M23 5C27 11 30 17 32 23" fill="none" stroke="#f8e87a" stroke-width="2.6" stroke-linecap="round" stroke-linejoin="round"/><path d="M0 36.5L12 38.5" fill="none" stroke="#d8c25e" stroke-width="4" stroke-linecap="round" stroke-linejoin="round"/><path d="M0 36.5L12 38.5" fill="none" stroke="#f8e87a" stroke-width="2.6" stroke-linecap="round" stroke-linejoin="round"/><path d="M0 59C10 56 22 52 32 42" fill="none" stroke="#d8c25e" stroke-width="4" stroke-linecap="round" stroke-linejoin="round"/><path d="M0 59C10 56 22 52 32 42" fill="none" stroke="#f8e87a" stroke-width="2.6" stroke-linecap="round" stroke-linejoin="round"/><path d="M12 58C15 64 22 70 25 74C27 80 35 86 36 92C33 104 26 116 21 127C18 133 15 142 14 150" fill="none" stroke="#d8c25e" stroke-width="4" stroke-linecap="round" stroke-linejoin="round"/><path d="M12 58C15 64 22 70 25 74C27 80 35 86 36 92C33 104 26 116 21 127C18 133 15 142 14 150" fill="none" stroke="#f8e87a" stroke-width="2.6" stroke-linecap="round" stroke-linejoin="round"/><path d="M0 141C5 146 10 148 14 150" fill="none" stroke="#d8c25e" stroke-width="4" stroke-linecap="round" stroke-linejoin="round"/><path d="M0 141C5 146 10 148 14 150" fill="none" stroke="#f8e87a" stroke-width="2.6" stroke-linecap="round" stroke-linejoin="round"/><path d="M50 27L64 20" fill="none" stroke="#d8c25e" stroke-width="4" stroke-linecap="round" stroke-linejoin="round"/><path d="M50 27L64 20" fill="none" stroke="#f8e87a" stroke-width="2.6" stroke-linecap="round" stroke-linejoin="round"/><path d="M0 4L22 8" fill="none" stroke="#d8c25e" stroke-width="4" stroke-linecap="round" stroke-linejoin="round"/><path d="M0 4L22 8" fill="none" stroke="#f8e87a" stroke-width="2.6" stroke-linecap="round" stroke-linejoin="round"/><text x="0" y="8" font-family="Liberation Sans" font-size="10" fill="#1a1a1a" transform="rotate(14 0 8)" letter-spacing="-0.3">er Rd</text><text x="9.5" y="42.5" font-family="Liberation Sans" font-size="10.5" fill="#1a1a1a" transform="rotate(3 9.5 42.5)" letter-spacing="-0.2">Bosto</text><text x="49" y="31" font-family="Liberation Sans" font-size="10" fill="#1a1a1a" transform="rotate(-18 49 31)">st R</text><g transform="translate(32,6.5)"><rect x="0.5" y="0.5" width="18" height="40" rx="9" fill="#fff" stroke="#a7a7a7"/><path d="M0.5 20.5h18" stroke="#aaa"/><path d="M9.5 7v8.5M5.3 11.2h8.4M5.3 30h8.4" stroke="#4f72c4" stroke-width="2"/></g><rect x="46.5" y="137.5" width="13" height="13" fill="#e6edf8" stroke="#8a8f98" stroke-width="1"/><path d="M48 149l10-10" stroke="#7f9ad0" stroke-width="0.8"/></svg></div><div class="a" style="left:66px;top:24px;width:1147px;height:776px;background:#f2f1f0;border-radius:7px 7px 0 0;overflow:hidden;border-right:1px solid #9f9b95"><div class="a" style="left:0;top:0;width:1147px;height:28px;background:linear-gradient(#5a5853 0px,#4f4d49 2px,#3f3e3a 14px,#3c3b37 28px)"></div><div class="a" style="left:0;top:28px;width:1147px;height:1px;background:#34332f"></div><div class="a" style="left:0;top:29px;width:1147px;height:24px;background:#3c3b37"></div><div class="a" style="left:0;top:53px;width:1147px;height:1px;background:#2b2a27"></div><div class="a" style="left:0;top:54px;width:1147px;height:1px;background:#fbfbfa"></div></div><div class="a" style="left:1212px;top:28px;width:1px;height:50px;background:#55534e"></div><div class="a" style="left:1212px;top:78px;width:1px;height:40px;background:#6f6c66"></div><div class="a" style="left:66px;top:78px;width:1px;height:722px;background:#aaa79f"></div><div class="a" style="left:76px;top:29px;width:55px;height:19px;border-radius:9px;background:#34332f"></div><div class="a" style="left:78px;top:31px;width:15px;height:15px;border-radius:50%;background:radial-gradient(circle at 50% 30%,#f58a5a,#ee6a34 55%,#e2561b)"></div><svg class="a" style="left:78px;top:31px" width="15" height="15"><path d="M4.6 4.8L10.4 10.4M10.4 4.8L4.6 10.4" stroke="#2a1a12" stroke-width="1.1"/></svg><div class="a" style="left:96px;top:31px;width:15px;height:15px;border-radius:50%;background:radial-gradient(circle at 50% 30%,#8f8d87,#7a7873 60%,#6b6964)"></div><div class="a" style="left:100px;top:38px;width:7px;height:1.4px;background:#34332f"></div><div class="a" style="left:114px;top:31px;width:15px;height:15px;border-radius:50%;background:radial-gradient(circle at 50% 30%,#8f8d87,#7a7873 60%,#6b6964)"></div><div class="a" style="left:118px;top:35px;width:7px;height:7px;border:1.2px solid #34332f;background:#7f7d78"></div><div class="a" style="left:67px;top:81px;width:194px;height:659px;background:#fff;border:1px solid #b9b5ae;border-right-color:#c5c1bb"></div><div class="a" style="left:68px;top:312px;width:192px;height:23px;background:linear-gradient(#dad9d6,#e1e0de 40%,#d9d7d3);border-top:1px solid #d0cdc8"></div><svg class="a" style="left:92.3px;top:109.4px" width="17" height="16" viewBox="0 0 17 16"><defs><linearGradient id="bg1" x1="0" y1="0" x2="0" y2="1"><stop offset="0" stop-color="#fafafa"/><stop offset="1" stop-color="#e4e4e3"/></linearGradient></defs><path d="M3.8 1h8.6a3 3 0 0 1 3 3v4.6a3 3 0 0 1-3 3h-1l-3.2 2.9v-2.9h-4.4a3 3 0 0 1-3-3v-4.6a3 3 0 0 1 3-3z" fill="url(#bg1)" stroke="#7b7b7b" stroke-width="1.3"/><rect x="7.7" y="8" width="1" height="1" fill="#333"/><rect x="9.7" y="8" width="1" height="1" fill="#333"/><rect x="11.7" y="8" width="1" height="1" fill="#333"/></svg><svg class="a" style="left:95px;top:131px" width="9" height="17" viewBox="0 0 9 17"><path d="M2.4 0v6.2h4.2V0" fill="none" stroke="#6a6a6a" stroke-width="1.2"/><path d="M3.6 0v5.2h1.8V0" fill="#b8b8b8"/><path d="M4.5 6.6c-1.9 0-3.1 1.1-3.1 2.9 0 1.6 0.9 2.6 1.1 4.2v2.2h4v-2.2c0.2-1.6 1.1-2.6 1.1-4.2 0-1.8-1.2-2.9-3.1-2.9z" fill="#fffdf0" stroke="#d7b32c" stroke-width="1"/><path d="M4.5 8.6v6.8" stroke="#2b2b2b" stroke-width="0.9"/><circle cx="4.5" cy="9.2" r="0.9" fill="#2b2b2b"/></svg><svg class="a" style="left:92.3px;top:178.4px" width="17" height="16" viewBox="0 0 17 16"><defs><linearGradient id="bg4" x1="0" y1="0" x2="0" y2="1"><stop offset="0" stop-color="#fafafa"/><stop offset="1" stop-color="#e4e4e3"/></linearGradient></defs><path d="M3.8 1h8.6a3 3 0 0 1 3 3v4.6a3 3 0 0 1-3 3h-1l-3.2 2.9v-2.9h-4.4a3 3 0 0 1-3-3v-4.6a3 3 0 0 1 3-3z" fill="url(#bg4)" stroke="#7b7b7b" stroke-width="1.3"/><rect x="7.7" y="8" width="1" height="1" fill="#333"/><rect x="9.7" y="8" width="1" height="1" fill="#333"/><rect x="11.7" y="8" width="1" height="1" fill="#333"/></svg><svg class="a" style="left:95px;top:200px" width="9" height="17" viewBox="0 0 9 17"><path d="M2.4 0v6.2h4.2V0" fill="none" stroke="#6a6a6a" stroke-width="1.2"/><path d="M3.6 0v5.2h1.8V0" fill="#b8b8b8"/><path d="M4.5 6.6c-1.9 0-3.1 1.1-3.1 2.9 0 1.6 0.9 2.6 1.1 4.2v2.2h4v-2.2c0.2-1.6 1.1-2.6 1.1-4.2 0-1.8-1.2-2.9-3.1-2.9z" fill="#fffdf0" stroke="#d7b32c" stroke-width="1"/><path d="M4.5 8.6v6.8" stroke="#2b2b2b" stroke-width="0.9"/><circle cx="4.5" cy="9.2" r="0.9" fill="#2b2b2b"/></svg><svg class="a" style="left:92.3px;top:224.4px" width="17" height="16" viewBox="0 0 17 16"><defs><linearGradient id="bg6" x1="0" y1="0" x2="0" y2="1"><stop offset="0" stop-color="#fafafa"/><stop offset="1" stop-color="#e4e4e3"/></linearGradient></defs><path d="M3.8 1h8.6a3 3 0 0 1 3 3v4.6a3 3 0 0 1-3 3h-1l-3.2 2.9v-2.9h-4.4a3 3 0 0 1-3-3v-4.6a3 3 0 0 1 3-3z" fill="url(#bg6)" stroke="#7b7b7b" stroke-width="1.3"/><rect x="7.7" y="8" width="1" height="1" fill="#333"/><rect x="9.7" y="8" width="1" height="1" fill="#333"/><rect x="11.7" y="8" width="1" height="1" fill="#333"/></svg><svg class="a" style="left:92.3px;top:247.4px" width="17" height="16" viewBox="0 0 17 16"><defs><linearGradient id="bg7" x1="0" y1="0" x2="0" y2="1"><stop offset="0" stop-color="#fafafa"/><stop offset="1" stop-color="#e4e4e3"/></linearGradient></defs><path d="M3.8 1h8.6a3 3 0 0 1 3 3v4.6a3 3 0 0 1-3 3h-1l-3.2 2.9v-2.9h-4.4a3 3 0 0 1-3-3v-4.6a3 3 0 0 1 3-3z" fill="url(#bg7)" stroke="#7b7b7b" stroke-width="1.3"/><rect x="7.7" y="8" width="1" height="1" fill="#333"/><rect x="9.7" y="8" width="1" height="1" fill="#333"/><rect x="11.7" y="8" width="1" height="1" fill="#333"/></svg><svg class="a" style="left:95px;top:269px" width="9" height="17" viewBox="0 0 9 17"><path d="M2.4 0v6.2h4.2V0" fill="none" stroke="#6a6a6a" stroke-width="1.2"/><path d="M3.6 0v5.2h1.8V0" fill="#b8b8b8"/><path d="M4.5 6.6c-1.9 0-3.1 1.1-3.1 2.9 0 1.6 0.9 2.6 1.1 4.2v2.2h4v-2.2c0.2-1.6 1.1-2.6 1.1-4.2 0-1.8-1.2-2.9-3.1-2.9z" fill="#fffdf0" stroke="#d7b32c" stroke-width="1"/><path d="M4.5 8.6v6.8" stroke="#2b2b2b" stroke-width="0.9"/><circle cx="4.5" cy="9.2" r="0.9" fill="#2b2b2b"/></svg><svg class="a" style="left:92.3px;top:293.4px" width="17" height="16" viewBox="0 0 17 16"><defs><linearGradient id="bg9" x1="0" y1="0" x2="0" y2="1"><stop offset="0" stop-color="#fafafa"/><stop offset="1" stop-color="#e4e4e3"/></linearGradient></defs><path d="M3.8 1h8.6a3 3 0 0 1 3 3v4.6a3 3 0 0 1-3 3h-1l-3.2 2.9v-2.9h-4.4a3 3 0 0 1-3-3v-4.6a3 3 0 0 1 3-3z" fill="url(#bg9)" stroke="#7b7b7b" stroke-width="1.3"/><rect x="7.7" y="8" width="1" height="1" fill="#333"/><rect x="9.7" y="8" width="1" height="1" fill="#333"/><rect x="11.7" y="8" width="1" height="1" fill="#333"/></svg><svg class="a" style="left:95px;top:338px" width="9" height="17" viewBox="0 0 9 17"><path d="M2.4 0v6.2h4.2V0" fill="none" stroke="#6a6a6a" stroke-width="1.2"/><path d="M3.6 0v5.2h1.8V0" fill="#b8b8b8"/><path d="M4.5 6.6c-1.9 0-3.1 1.1-3.1 2.9 0 1.6 0.9 2.6 1.1 4.2v2.2h4v-2.2c0.2-1.6 1.1-2.6 1.1-4.2 0-1.8-1.2-2.9-3.1-2.9z" fill="#fffdf0" stroke="#d7b32c" stroke-width="1"/><path d="M4.5 8.6v6.8" stroke="#2b2b2b" stroke-width="0.9"/><circle cx="4.5" cy="9.2" r="0.9" fill="#2b2b2b"/></svg><svg class="a" style="left:95px;top:361px" width="9" height="17" viewBox="0 0 9 17"><path d="M2.4 0v6.2h4.2V0" fill="none" stroke="#6a6a6a" stroke-width="1.2"/><path d="M3.6 0v5.2h1.8V0" fill="#b8b8b8"/><path d="M4.5 6.6c-1.9 0-3.1 1.1-3.1 2.9 0 1.6 0.9 2.6 1.1 4.2v2.2h4v-2.2c0.2-1.6 1.1-2.6 1.1-4.2 0-1.8-1.2-2.9-3.1-2.9z" fill="#fffdf0" stroke="#d7b32c" stroke-width="1"/><path d="M4.5 8.6v6.8" stroke="#2b2b2b" stroke-width="0.9"/><circle cx="4.5" cy="9.2" r="0.9" fill="#2b2b2b"/></svg><svg class="a" style="left:95px;top:384px" width="9" height="17" viewBox="0 0 9 17"><path d="M2.4 0v6.2h4.2V0" fill="none" stroke="#6a6a6a" stroke-width="1.2"/><path d="M3.6 0v5.2h1.8V0" fill="#b8b8b8"/><path d="M4.5 6.6c-1.9 0-3.1 1.1-3.1 2.9 0 1.6 0.9 2.6 1.1 4.2v2.2h4v-2.2c0.2-1.6 1.1-2.6 1.1-4.2 0-1.8-1.2-2.9-3.1-2.9z" fill="#fffdf0" stroke="#d7b32c" stroke-width="1"/><path d="M4.5 8.6v6.8" stroke="#2b2b2b" stroke-width="0.9"/><circle cx="4.5" cy="9.2" r="0.9" fill="#2b2b2b"/></svg><svg class="a" style="left:92.3px;top:408.4px" width="17" height="16" viewBox="0 0 17 16"><defs><linearGradient id="bg14" x1="0" y1="0" x2="0" y2="1"><stop offset="0" stop-color="#fafafa"/><stop offset="1" stop-color="#e4e4e3"/></linearGradient></defs><path d="M3.8 1h8.6a3 3 0 0 1 3 3v4.6a3 3 0 0 1-3 3h-1l-3.2 2.9v-2.9h-4.4a3 3 0 0 1-3-3v-4.6a3 3 0 0 1 3-3z" fill="url(#bg14)" stroke="#7b7b7b" stroke-width="1.3"/><rect x="7.7" y="8" width="1" height="1" fill="#333"/><rect x="9.7" y="8" width="1" height="1" fill="#333"/><rect x="11.7" y="8" width="1" height="1" fill="#333"/></svg><svg class="a" style="left:92.3px;top:477.4px" width="17" height="16" viewBox="0 0 17 16"><defs><linearGradient id="bg17" x1="0" y1="0" x2="0" y2="1"><stop offset="0" stop-color="#fafafa"/><stop offset="1" stop-color="#e4e4e3"/></linearGradient></defs><path d="M3.8 1h8.6a3 3 0 0 1 3 3v4.6a3 3 0 0 1-3 3h-1l-3.2 2.9v-2.9h-4.4a3 3 0 0 1-3-3v-4.6a3 3 0 0 1 3-3z" fill="url(#bg17)" stroke="#7b7b7b" stroke-width="1.3"/><rect x="7.7" y="8" width="1" height="1" fill="#333"/><rect x="9.7" y="8" width="1" height="1" fill="#333"/><rect x="11.7" y="8" width="1" height="1" fill="#333"/></svg><svg class="a" style="left:95px;top:499px" width="9" height="17" viewBox="0 0 9 17"><path d="M2.4 0v6.2h4.2V0" fill="none" stroke="#6a6a6a" stroke-width="1.2"/><path d="M3.6 0v5.2h1.8V0" fill="#b8b8b8"/><path d="M4.5 6.6c-1.9 0-3.1 1.1-3.1 2.9 0 1.6 0.9 2.6 1.1 4.2v2.2h4v-2.2c0.2-1.6 1.1-2.6 1.1-4.2 0-1.8-1.2-2.9-3.1-2.9z" fill="#fffdf0" stroke="#d7b32c" stroke-width="1"/><path d="M4.5 8.6v6.8" stroke="#2b2b2b" stroke-width="0.9"/><circle cx="4.5" cy="9.2" r="0.9" fill="#2b2b2b"/></svg><svg class="a" style="left:95px;top:522px" width="9" height="17" viewBox="0 0 9 17"><path d="M2.4 0v6.2h4.2V0" fill="none" stroke="#6a6a6a" stroke-width="1.2"/><path d="M3.6 0v5.2h1.8V0" fill="#b8b8b8"/><path d="M4.5 6.6c-1.9 0-3.1 1.1-3.1 2.9 0 1.6 0.9 2.6 1.1 4.2v2.2h4v-2.2c0.2-1.6 1.1-2.6 1.1-4.2 0-1.8-1.2-2.9-3.1-2.9z" fill="#fffdf0" stroke="#d7b32c" stroke-width="1"/><path d="M4.5 8.6v6.8" stroke="#2b2b2b" stroke-width="0.9"/><circle cx="4.5" cy="9.2" r="0.9" fill="#2b2b2b"/></svg><svg class="a" style="left:68.5px;top:88.5px" width="9" height="8"><path d="M0.6 0.8h7.8L4.5 7z" fill="#7a7a7a" stroke="#606060" stroke-width="0.7"/></svg><svg class="a" style="left:68.5px;top:571.5px" width="9" height="8"><path d="M0.6 0.8h7.8L4.5 7z" fill="#7a7a7a" stroke="#606060" stroke-width="0.7"/></svg><svg class="a" style="left:269px;top:83px" width="10" height="12"><path d="M1 1l8 5-8 5z" fill="#7a7a7a" stroke="#444" stroke-width="0.9"/></svg><svg class="a" style="left:1191px;top:89px" width="14" height="13"><path d="M2.3 2.3L11.7 10.7M11.7 2.3L2.3 10.7" stroke="#5e5e5e" stroke-width="3.2" stroke-linecap="square"/></svg><div class="a" style="left:267px;top:117px;width:925px;height:622px;background:#fff;border:1px solid #bdb9b3"></div><div class="a" style="left:1199px;top:117px;width:13px;height:622px;border-radius:6px;background:linear-gradient(90deg,#f6f5f4,#fbfbfa 50%,#eeedeb);border:1px solid #bdb9b3"></div><div class="a" style="left:1199px;top:130px;width:13px;height:596px;border-radius:6px;background:linear-gradient(90deg,#d8d6d3,#dfdedc 50%,#d5d3cf);border:1px solid #b8b5b0"></div><svg class="a" style="left:1201px;top:120px" width="9" height="8"><path d="M1 6h7L4.5 2z" fill="#555"/></svg><div class="a" style="left:1199px;top:696px;width:13px;height:31px;border-radius:6px;background:linear-gradient(90deg,#f7f7f6,#fff 50%,#ecebe9);border:1px solid #aaa6a0"></div><div class="a" style="left:1203px;top:707px;width:3px;height:7px;background:repeating-linear-gradient(#888 0 1px,transparent 1px 3px)"></div><svg class="a" style="left:1201px;top:728px" width="9" height="8"><path d="M1 2h7L4.5 6z" fill="#999"/></svg><div class="a" style="left:355px;top:748px;width:857px;height:25px;border-radius:4px;background:#fff;border:2px solid #e4602e"></div><div class="a" style="left:66px;top:799px;width:1147px;height:1px;background:#a9a59f"></div><div class="a" style="left:359px;top:752px;width:1px;height:16px;background:#222"></div><div class="a" style="left:67px;top:778px;width:1145px;height:1px;background:#d6d3ce"></div><div class="a" style="left:497px;top:118px;width:1px;height:620px;background:#111"></div><div class="m" style="left:368.0px;top:120px;clip-path:inset(0 0 0 5px)"><span style="color:#333333">owardTheDuck</span><span style="color:#1a62f2">&gt;</span></div><div class="a" style="left:488px;top:119px;width:1px;height:17px;background:#111"></div><div class="m" style="left:494.0px;top:120px;clip-path:inset(0 0 0 3px)"><span style="color:#333333">T</span></div><div class="m" style="left:503.0px;top:120px"><span style="color:#333333">uploads?,</span></div><div class="m" style="left:584.0px;top:120px;clip-path:inset(11px 0 0 0)"><span style="color:#333333">Jeah I&#x27;m kinda thinking that...ould Ir o</span></div><div class="m" style="left:271px;top:138px"><span style="color:#333333">[19:40]</span></div><div class="m" style="left:440.0px;top:138px"><span style="color:#1a62f2">&lt;</span><span style="color:#333333">RAOF</span><span style="color:#1a62f2">&gt;</span></div><div class="m" style="left:503.0px;top:138px"><span style="color:#333333">Not yet.ly slow I dont know...</span></div><div class="m" style="left:271px;top:156px"><span style="color:#333333">[19:40]</span></div><div class="m" style="left:395.0px;top:156px"><span style="color:#1a62f2">&lt;</span><span style="color:#333333">Term</span><span style="color:#1a62f2">&lt;</span><span style="color:#333333">RAOF</span><span style="color:#1a62f2">&gt;</span></div><div class="m" style="left:503.0px;top:156px"><span style="color:#333333">These are preparatory steps, which won&#x27;t break anything.</span></div><div class="m" style="left:271px;top:174px"><span style="color:#333333">[19:40]</span></div><div class="m" style="left:395.0px;top:174px;clip-path:inset(0 0 0 7px)"><span style="color:#333333">rdThe</span><span style="color:#1a62f2">&lt;</span><span style="color:#333333">RAOF</span><span style="color:#1a62f2">&gt;</span></div><div class="m" style="left:503.0px;top:174px"><span style="color:#333333">So that when we *do* break everything it&#x27;s quicker to unbreak it :)</span></div><div class="m" style="left:271px;top:192px"><span style="color:#333333">[19:43]</span></div><div class="m" style="left:404.0px;top:192px"><span style="color:#1a62f2">&lt;</span><span style="color:#333333">Terman</span><span style="color:#333333">&lt;</span><span style="color:#3f9a6c;font-weight:bold">-</span><span style="color:#3f93f0;font-weight:bold">-</span></div><div class="m" style="left:503.0px;top:192px"><span style="color:#333333">sabdfl has quit (Ping timeout: 276 seconds)</span></div><div class="m" style="left:271px;top:210px"><span style="color:#333333">[19:48]</span></div><div class="m" style="left:440.0px;top:210px"><span style="color:#333333">rea</span><span style="color:#777777;font-weight:bold">-</span><span style="color:#3f9a6c;font-weight:bold">-</span><span style="color:#1a62f2">&gt;</span></div><div class="m" style="left:368.0px;top:210px;clip-path:inset(11px 0 0 0)"><span style="color:#333333">G_ulf.st</span></div><div class="m" style="left:503.0px;top:210px"><span style="color:#333333;font-weight:bold">dashua</span><span style="color:#333333"> (</span><span style="color:#1e8a55">~jws141@c-71-230-219-252.hsd1.nj.comcast.net</span><span style="color:#333333">) has joined     ears</span></div><div class="m" style="left:271px;top:228px"><span style="color:#333333">[</span></div><div class="m" style="left:350.0px;top:228px;clip-path:inset(0 0 3px 0)"><span style="color:#1a62f2">&lt;</span><span style="color:#333333">HowardTheDuck</span><span style="color:#1a62f2">&gt;</span></div><div class="a" style="left:488px;top:227px;width:1px;height:17px;background:#111"></div><div class="m" style="left:494.0px;top:228px;clip-path:inset(0 0 0 2px)"><span style="color:#333333">_</span></div><div class="m" style="left:503.0px;top:228px"><span style="color:#333333">#ubuntu-desktop</span></div><div class="m" style="left:647px;top:227px;clip-path:inset(9px 0 0 0)"><span style="color:#333333">....ers laptop</span></div><div class="m" style="left:271px;top:246px"><span style="color:#333333">[19:50]</span></div><div class="m" style="left:395.0px;top:246px;clip-path:inset(0 0 0 4px)"><span style="color:#333333">ul</span><span style="color:#1a62f2">&lt;</span><span style="color:#333333">TheMuso</span><span style="color:#1a62f2">&gt;</span></div><div class="m" style="left:503.0px;top:246px"><span style="color:#333333">Right.o complete doesn&#x27;t work when </span></div><div class="m" style="left:818.0px;top:246px;clip-path:inset(0 0 8px 0)"><span style="color:#333333">t</span></div><div class="m" style="left:271px;top:264px"><span style="color:#333333">[19:52]</span></div><div class="m" style="left:404.0px;top:264px"><span style="color:#1a62f2">&lt;</span><span style="color:#333333">teadic</span><span style="color:#333333">&lt;</span><span style="color:#3f9a6c;font-weight:bold">-</span><span style="color:#3f93f0;font-weight:bold">-</span></div><div class="m" style="left:503.0px;top:264px"><span style="color:#333333">micahg has quit (Ping timeout: 265 seconds)</span></div><div class="m" style="left:271px;top:282px"><span style="color:#333333">[19:54]</span></div><div class="m" style="left:404.0px;top:282px"><span style="color:#1a62f2">&lt;</span><span style="color:#333333">teadic</span><span style="color:#333333">&lt;</span><span style="color:#3f9a6c;font-weight:bold">-</span><span style="color:#3f93f0;font-weight:bold">-</span></div><div class="m" style="left:503.0px;top:282px"><span style="color:#333333">PlainFlavored has quit (Quit: Leaving)</span></div><div class="m" style="left:845.0px;top:282px;clip-path:inset(11px 0 0 0)"><span style="color:#333333">_..</span></div><div class="m" style="left:271px;top:300px"><span style="color:#333333">[19:58]</span></div><div class="m" style="left:395.0px;top:300px;clip-path:inset(0 0 0 5px)"><span style="color:#1a62f2">&lt;</span><span style="color:#333333">Terminu</span><span style="color:#333333">&lt;</span><span style="color:#3f9a6c;font-weight:bold">-</span><span style="color:#3f93f0;font-weight:bold">-</span></div><div class="m" style="left:503.0px;top:300px"><span style="color:#333333">hoonteke has quit (Ping timeout: 240 seconds)</span></div><div class="m" style="left:271px;top:318px"><span style="color:#333333">[19:59]</span></div><div class="m" style="left:395.0px;top:318px;clip-path:inset(0 0 0 5px)"><span style="color:#333333">ulfstrea</span><span style="color:#777777;font-weight:bold">-</span><span style="color:#3f9a6c;font-weight:bold">-</span><span style="color:#1a62f2">&gt;</span></div><div class="m" style="left:503.0px;top:318px"><span style="color:#333333;font-weight:bold">tkamppeter_</span><span style="color:#333333"> (</span><span style="color:#1e8a55">~till@p5DDBA88D.dip.t-dialin.net</span><span style="color:#333333">) has joined #ubuntu-desktop</span></div><div class="m" style="left:271px;top:336px"><span style="color:#333333">[19:59]</span></div><div class="m" style="left:404.0px;top:336px"><span style="color:#1a62f2">&lt;</span><span style="color:#333333">teadic</span><span style="color:#333333">&lt;</span><span style="color:#3f9a6c;font-weight:bold">-</span><span style="color:#3f93f0;font-weight:bold">-</span></div><div class="m" style="left:503.0px;top:336px"><span style="color:#333333">aquarius has quit (Read error: Connection reset by peer)             ub</span></div><div class="m" style="left:271px;top:354px"><span style="color:#333333">[20:00]</span></div><div class="m" style="left:404.0px;top:354px"><span style="color:#1a62f2">&lt;</span><span style="color:#333333">teadic</span><span style="color:#333333">&lt;</span><span style="color:#3f9a6c;font-weight:bold">-</span><span style="color:#3f93f0;font-weight:bold">-</span></div><div class="m" style="left:503.0px;top:354px"><span style="color:#333333">tkamppeter has quit (Read error: Operation timed out)</span></div><div class="m" style="left:271px;top:372px"><span style="color:#333333">[20:02]</span></div><div class="m" style="left:395.0px;top:372px;clip-path:inset(0 0 0 4px)"><span style="color:#333333">Manhatta</span><span style="color:#333333">&lt;</span><span style="color:#3f9a6c;font-weight:bold">-</span><span style="color:#3f93f0;font-weight:bold">-</span></div><div class="m" style="left:365.0px;top:372px;clip-path:inset(11px 0 0 0)"><span style="color:#333333">_._.</span></div><div class="m" style="left:503.0px;top:372px"><span style="color:#333333">coffeedude has quit (Ping timeout: 240 seconds)</span></div><div class="m" style="left:271px;top:390px"><span style="color:#333333">[20:04]</span></div><div class="m" style="left:404.0px;top:390px"><span style="color:#1a62f2">&lt;</span><span style="color:#333333">teadic</span><span style="color:#333333">&lt;</span><span style="color:#3f9a6c;font-weight:bold">-</span><span style="color:#3f93f0;font-weight:bold">-</span></div><div class="m" style="left:503.0px;top:390px"><span style="color:#333333">tremolux has quit (Quit: Bye)</span></div><div class="m" style="left:271px;top:408px"><span style="color:#333333">[20:05]</span></div><div class="m" style="left:386.0px;top:408px;clip-path:inset(11px 0 0 0)"><span style="color:#333333">. ..</span></div><div class="m" style="left:422.0px;top:408px"><span style="color:#1a62f2">&lt;</span><span style="color:#333333">bryceh</span><span style="color:#1a62f2">&gt;</span></div><div class="m" style="left:503.0px;top:408px"><span style="color:#333333">TheMuso, a rough plan of attack is at https://wiki.ubuntu.com/X/Roadmap/Natt</span></div><div class="m" style="left:271px;top:426px"><span style="color:#333333">[</span></div><div class="m" style="left:404.0px;top:426px"><span style="color:#1a62f2">&lt;</span><span style="color:#f5c211;font-weight:bold">teadict</span><span style="color:#1a62f2">&gt;</span></div><div class="a" style="left:488px;top:425px;width:1px;height:18px;background:#111"></div><div class="m" style="left:494.0px;top:426px;clip-path:inset(0 0 0 3px)"><span style="color:#333333">A</span></div><div class="m" style="left:503.0px;top:426px"><span style="color:#333333">y if you&#x27;re interested</span></div><div class="m" style="left:271px;top:444px"><span style="color:#333333">[20:06]</span></div><div class="m" style="left:395.0px;top:444px"><span style="color:#1a62f2">&lt;</span><span style="color:#333333">T</span><span style="color:#1a62f2">&lt;</span><span style="color:#333333">TheMuso</span><span style="color:#1a62f2">&gt;</span></div><div class="m" style="left:503.0px;top:444px"><span style="color:#333333">bryceh: thanksif it&#x27;s in a NAS, your </span></div><div class="m" style="left:836.0px;top:444px;clip-path:inset(0 0 7px 0)"><span style="color:#333333">slow drive will stil</span></div><div class="m" style="left:1124.0px;top:444px"><span style="color:#333333">than</span></div><div class="m" style="left:271px;top:462px"><span style="color:#333333">[20:06]</span></div><div class="m" style="left:422.0px;top:462px"><span style="color:#1a62f2">&lt;</span><span style="color:#333333">bryceh</span><span style="color:#1a62f2">&gt;</span></div><div class="m" style="left:503.0px;top:462px"><span style="color:#333333">like raof said we&#x27;re just tending to preparatory stuff right now</span></div><div class="m" style="left:271px;top:480px"><span style="color:#333333">[20:06]</span></div><div class="m" style="left:458.0px;top:480px"><span style="color:#333333">&lt;</span><span style="color:#333333">&lt;</span><span style="color:#3f9a6c;font-weight:bold">-</span><span style="color:#3f93f0;font-weight:bold">-</span></div><div class="m" style="left:503.0px;top:480px"><span style="color:#333333">nekohayo has quit (Quit: http://specto.sf.net)</span></div><div class="m" style="left:271px;top:498px"><span style="color:#333333">[20:06]</span></div><div class="m" style="left:395.0px;top:498px"><span style="color:#a526e8">&lt;</span><span style="color:#333333">Amarant</span><span style="color:#333333">&lt;</span><span style="color:#3f9a6c;font-weight:bold">-</span><span style="color:#3f93f0;font-weight:bold">-</span></div><div class="m" style="left:503.0px;top:498px"><span style="color:#333333">glatzor has quit (Read error: Operation timed out)</span></div><div class="m" style="left:953.0px;top:498px;clip-path:inset(11px 0 0 0)"><span style="color:#333333">_ the Net</span></div><div class="m" style="left:271px;top:516px"><span style="color:#333333">[20:07]</span></div><div class="m" style="left:395.0px;top:516px"><span style="color:#a526e8">&lt;</span><span style="color:#333333">A</span><span style="color:#1a62f2">&lt;</span><span style="color:#333333">TheMuso</span><span style="color:#1a62f2">&gt;</span></div><div class="m" style="left:503.0px;top:516px"><span style="color:#333333">yep gotchaading it still works be</span></div><div class="m" style="left:800.0px;top:516px;clip-path:inset(0 0 7px 0)"><span style="color:#333333">cause I use MT so it&#x27;s jus</span></div><div class="m" style="left:1133.0px;top:516px"><span style="color:#333333">page</span></div><div class="m" style="left:271px;top:534px"><span style="color:#333333">[20:14]</span></div><div class="m" style="left:395.0px;top:534px;clip-path:inset(0 0 0 5px)"><span style="color:#a526e8">&lt;</span><span style="color:#333333">Amar</span><span style="color:#1a62f2">&lt;</span><span style="color:#333333">RAOF</span><span style="color:#1a62f2">&gt;</span></div><div class="m" style="left:503.0px;top:534px"><span style="color:#333333">Hm.  I appear to spell build as “bulid” with remarkable frequency.</span></div><div class="m" style="left:271px;top:552px"><span style="color:#333333">[20:18]</span></div><div class="m" style="left:395.0px;top:552px;clip-path:inset(0 0 0 6px)"><span style="color:#333333">rdTheDuc</span><span style="color:#333333">&lt;</span><span style="color:#3f9a6c;font-weight:bold">-</span><span style="color:#3f93f0;font-weight:bold">-</span></div><div class="m" style="left:503.0px;top:552px"><span style="color:#333333">hggdh has quit (Quit: WeeChat 0.3.5-dev)</span></div><div class="m" style="left:863.0px;top:552px;clip-path:inset(11px 0 0 0)"><span style="color:#333333">_.. _</span></div><div class="m" style="left:1124.0px;top:552px"><span style="color:#333333">net</span></div><div class="m" style="left:271px;top:570px"><span style="color:#333333">[20:20]</span></div><div class="m" style="left:467.0px;top:570px"><span style="color:#333333">&lt;</span><span style="color:#3f9a6c;font-weight:bold">-</span><span style="color:#3f93f0;font-weight:bold">-</span></div><div class="m" style="left:503.0px;top:570px"><span style="color:#333333">johanbr has quit (Ping timeout: 240 seconds)</span></div><div class="m" style="left:271px;top:588px"><span style="color:#333333">[20:21]</span></div><div class="m" style="left:395.0px;top:588px;clip-path:inset(0 0 0 6px)"><span style="color:#333333">rdTheDuc</span><span style="color:#333333">&lt;</span><span style="color:#3f9a6c;font-weight:bold">-</span><span style="color:#3f93f0;font-weight:bold">-</span></div><div class="m" style="left:337.0px;top:588px;clip-path:inset(11px 0 0 0)"><span style="color:#333333">._.._..</span></div><div class="m" style="left:503.0px;top:588px"><span style="color:#333333">AbsintheSyringe has quit (Quit: http://bit.ly/9eZTrp)</span></div><div class="m" style="left:980.0px;top:588px;clip-path:inset(11px 0 0 0)"><span style="color:#333333">ped for ex ex</span></div><div class="m" style="left:271px;top:606px"><span style="color:#333333">[20:22]</span></div><div class="m" style="left:467.0px;top:606px"><span style="color:#777777;font-weight:bold">-</span><span style="color:#3f9a6c;font-weight:bold">-</span><span style="color:#1a62f2">&gt;</span></div><div class="m" style="left:503.0px;top:606px"><span style="color:#333333;font-weight:bold">hggdh</span><span style="color:#333333"> (</span><span style="color:#1e8a55">~hggdh@ubuntu/member/hggdh</span><span style="color:#333333">) has joined #ubuntu-desktop</span></div><div class="m" style="left:271px;top:624px"><span style="color:#333333">[20:24]</span></div><div class="m" style="left:395.0px;top:624px"><span style="color:#1a62f2">&lt;</span><span style="color:#333333">jhansonxi</span><span style="color:#1a62f2">&gt;</span></div><div class="m" style="left:503.0px;top:624px"><span style="color:#333333">I would like to call attention to bug #574187 which is a pam problem with</span></div><div class="m" style="left:271px;top:642px;clip-path:inset(11px 0 0 0)"><span style="color:#333333">[</span></div><div class="m" style="left:458.0px;top:642px"><span style="color:#777777;font-weight:bold">-</span><span style="color:#3f9a6c;font-weight:bold">-</span><span style="color:#1a62f2">&gt;</span></div><div class="a" style="left:488px;top:641px;width:1px;height:35px;background:#111"></div><div class="m" style="left:494.0px;top:642px;clip-path:inset(0 0 0 3px)"><span style="color:#333333">L</span></div><div class="m" style="left:503.0px;top:642px"><span style="color:#333333">Gnome screensaver and the nopasswdlogin group.  It&#x27;s really annoying to</span></div><div class="m" style="left:494.0px;top:660px;clip-path:inset(0 0 0 3px)"><span style="color:#333333">#</span></div><div class="m" style="left:503.0px;top:660px"><span style="color:#333333">disable password logins but then get locked out by the screensaver.</span></div><div class="m" style="left:271px;top:678px"><span style="color:#333333">[20:24]</span></div><div class="m" style="left:431.0px;top:678px"><span style="color:#1a62f2">&lt;</span><span style="color:#333333">ubot2</span><span style="color:#1a62f2">&gt;</span></div><div class="m" style="left:503.0px;top:678px"><span style="color:#333333">Launchpad bug 574187 in gnome-screensaver &quot;Screensaver asks password when</span></div><div class="a" style="left:488px;top:695px;width:1px;height:12px;background:#111"></div><div class="m" style="left:494.0px;top:696px;clip-path:inset(0 0 0 3px)"><span style="color:#333333">t</span></div><div class="m" style="left:503.0px;top:696px"><span style="color:#333333">the user is in the password-less login group&quot; [Undecided,Incomplete]</span></div><div class="m" style="left:271px;top:714px"><span style="color:#333333">[20:26]</span></div><div class="m" style="left:395.0px;top:714px"><span style="color:#a526e8">&lt;</span><span style="color:#333333">Amaranth</span><span style="color:#a526e8">&gt;</span></div><div class="a" style="left:488px;top:715px;width:1px;height:23px;background:#111"></div><div class="m" style="left:494.0px;top:714px;clip-path:inset(0 0 0 3px)"><span style="color:#333333">t</span></div><div class="m" style="left:503.0px;top:714px"><span style="color:#333333">https://launchpad.net/bugs/574187</span></div><div class="m" style="left:800.0px;top:714px;clip-path:inset(6px 0 4px 0)"><span style="color:#333333">manation reset by peer)ined #a1111111111111</span></div><div class="a" style="left:435px;top:731px;width:1px;height:7px;background:#222"></div><div class="a" style="left:444px;top:731px;width:1px;height:7px;background:#222"></div><div class="a" style="left:453px;top:731px;width:1px;height:7px;background:#222"></div><div class="a" style="left:462px;top:731px;width:1px;height:7px;background:#222"></div><div class="a" style="left:471px;top:731px;width:1px;height:7px;background:#222"></div><div class="a" style="left:480px;top:731px;width:1px;height:7px;background:#222"></div><div class="a" style="left:508px;top:731px;width:1px;height:7px;background:#222"></div><div class="a" style="left:517px;top:731px;width:1px;height:7px;background:#222"></div><div class="a" style="left:526px;top:731px;width:1px;height:7px;background:#222"></div><div class="a" style="left:535px;top:731px;width:1px;height:7px;background:#222"></div><div class="a" style="left:544px;top:731px;width:1px;height:7px;background:#222"></div><div class="a" style="left:553px;top:731px;width:1px;height:7px;background:#222"></div><div class="a" style="left:562px;top:731px;width:1px;height:7px;background:#222"></div><div class="a" style="left:571px;top:731px;width:1px;height:7px;background:#222"></div><div class="a" style="left:580px;top:731px;width:1px;height:7px;background:#222"></div><div class="a" style="left:589px;top:731px;width:1px;height:7px;background:#222"></div><div class="a" style="left:598px;top:731px;width:1px;height:7px;background:#222"></div><div class="a" style="left:607px;top:731px;width:1px;height:7px;background:#222"></div><div class="a" style="left:616px;top:731px;width:1px;height:7px;background:#222"></div><div class="a" style="left:625px;top:731px;width:1px;height:7px;background:#222"></div><div class="a" style="left:634px;top:731px;width:1px;height:7px;background:#222"></div><div class="a" style="left:643px;top:731px;width:1px;height:7px;background:#222"></div><div class="t" style="left:142.5px;top:30.42px;font-size:15px;font-weight:700;color:#dfdbd2;letter-spacing:0.159px;">FreeNode: #ubuntu-desktop</div><div class="t" style="left:76px;top:57.42px;font-size:15px;font-weight:400;color:#dfdbd2;letter-spacing:-0.615px;">IRC</div><div class="t" style="left:111px;top:57.42px;font-size:15px;font-weight:400;color:#dfdbd2;letter-spacing:0.535px;">Edit</div><div class="t" style="left:154.3px;top:57.42px;font-size:15px;font-weight:400;color:#dfdbd2;letter-spacing:0.612px;">Network</div><div class="t" style="left:228.5px;top:57.42px;font-size:15px;font-weight:400;color:#dfdbd2;letter-spacing:-0.003px;">Discussion</div><div class="t" style="left:316px;top:57.42px;font-size:15px;font-weight:400;color:#dfdbd2;letter-spacing:0.188px;">View</div><div class="t" style="left:364px;top:57.42px;font-size:15px;font-weight:400;color:#dfdbd2;letter-spacing:0.035px;">Help</div><div class="t" style="left:101.2px;top:85.42px;font-size:15px;font-weight:400;color:#3c3c3c;letter-spacing:0.448px;">freenode</div><div class="t" style="left:112.3px;top:108.42px;font-size:15px;font-weight:400;color:#3c3c3c;letter-spacing:0.686px;">##club-ubuntu</div><div class="t" style="left:112.3px;top:131.43px;font-size:15px;font-weight:400;color:#3c3c3c;letter-spacing:0.296px;">#ayatana</div><div class="t" style="left:112.3px;top:154.43px;font-size:15px;font-weight:400;color:#3c3c3c;letter-spacing:0.241px;">#compiz-dev</div><div class="t" style="left:112.3px;top:177.43px;font-size:15px;font-weight:400;color:#3c3c3c;letter-spacing:0.524px;">#linaro</div><div class="t" style="left:112.3px;top:200.43px;font-size:15px;font-weight:400;color:#3c3c3c;letter-spacing:0.487px;">#linaro-meeting</div><div class="t" style="left:112.3px;top:223.43px;font-size:15px;font-weight:400;color:#3c3c3c;letter-spacing:0.667px;">#minecraft</div><div class="t" style="left:112.3px;top:246.43px;font-size:15px;font-weight:400;color:#3c3c3c;letter-spacing:0.781px;">#ubuntu</div><div class="t" style="left:112.3px;top:269.43px;font-size:15px;font-weight:400;color:#3c3c3c;letter-spacing:0.597px;">#ubuntu+1</div><div class="t" style="left:112.3px;top:292.43px;font-size:15px;font-weight:400;color:#3c3c3c;letter-spacing:0.640px;">#ubuntu-arm</div><div class="t" style="left:112.3px;top:315.43px;font-size:15px;font-weight:400;color:#3c3c3c;letter-spacing:0.596px;">#ubuntu-desktop</div><div class="t" style="left:112.6px;top:338.43px;font-size:15px;font-weight:400;color:#3c3c3c;letter-spacing:0.563px;">#ubuntu-devel</div><div class="t" style="left:112.6px;top:361.43px;font-size:15px;font-weight:400;color:#3c3c3c;letter-spacing:0.587px;">#ubuntu-meeting</div><div class="t" style="left:112.6px;top:384.43px;font-size:15px;font-weight:400;color:#3c3c3c;letter-spacing:0.735px;">#ubuntu-motu</div><div class="t" style="left:112.6px;top:407.43px;font-size:15px;font-weight:400;color:#3c3c3c;letter-spacing:0.880px;">#ubuntu-offtopic</div><div class="t" style="left:112.6px;top:430.43px;font-size:15px;font-weight:400;color:#3c3c3c;letter-spacing:0.545px;">#ubuntu-ops</div><div class="t" style="left:112.6px;top:453.43px;font-size:15px;font-weight:400;color:#3c3c3c;letter-spacing:0.631px;">#ubuntu-x</div><div class="t" style="left:112.6px;top:476.43px;font-size:15px;font-weight:400;color:#3c3c3c;letter-spacing:0.376px;">#wayland</div><div class="t" style="left:112.6px;top:499.43px;font-size:15px;font-weight:400;color:#3c3c3c;letter-spacing:0.261px;">#xfce-dev</div><div class="t" style="left:112.6px;top:522.42px;font-size:15px;font-weight:400;color:#3c3c3c;letter-spacing:0.455px;">#xorg-devel</div><div class="t" style="left:112.6px;top:545.42px;font-size:15px;font-weight:400;color:#c4c2bf;letter-spacing:0.200px;">FusioBot</div><div class="t" style="left:101.7px;top:568.42px;font-size:15px;font-weight:400;color:#3c3c3c;letter-spacing:0.087px;">Newcore</div><div class="t" style="left:112.6px;top:591.42px;font-size:15px;font-weight:400;color:#3c3c3c;letter-spacing:0.510px;">#all</div><div class="t" style="left:293px;top:82.42px;font-size:15px;font-weight:400;color:#3c3c3c;letter-spacing:0.395px;">&quot;Welcome to #ubuntu-desktop - home of the Desktop team - </div><div class="t" style="left:718.3px;top:82.42px;font-size:15px;font-weight:400;color:#dd4814;letter-spacing:0.723px;text-decoration:underline;text-underline-offset:2px">http://lists.ubuntu.com/mailman/listinfo/ubuntu-desktop/</div><div class="t" style="left:1128.5px;top:82.42px;font-size:15px;font-weight:400;color:#3c3c3c;letter-spacing:0.000px;">|</div><div class="t" style="left:1136px;top:82.42px;font-size:15px;font-weight:400;color:#3c3c3c;letter-spacing:-0.379px;">If y</div><div class="t" style="left:1158px;top:82.42px;font-size:15px;font-weight:400;color:#dd4814;letter-spacing:0.761px;text-decoration:underline;text-underline-offset:2px">...</div><div class="t" style="left:130.3px;top:752.42px;font-size:15px;font-weight:400;color:#3c3c3c;letter-spacing:-0.186px;">102 Users</div><div class="t" style="left:273.3px;top:752.42px;font-size:15px;font-weight:400;color:#3c3c3c;letter-spacing:0.307px;">Amaranth</div><div class="t" style="left:69.4px;top:780.42px;font-size:15px;font-weight:400;color:#3c3c3c;letter-spacing:0.007px;">0.1s lag</div></body></html>
